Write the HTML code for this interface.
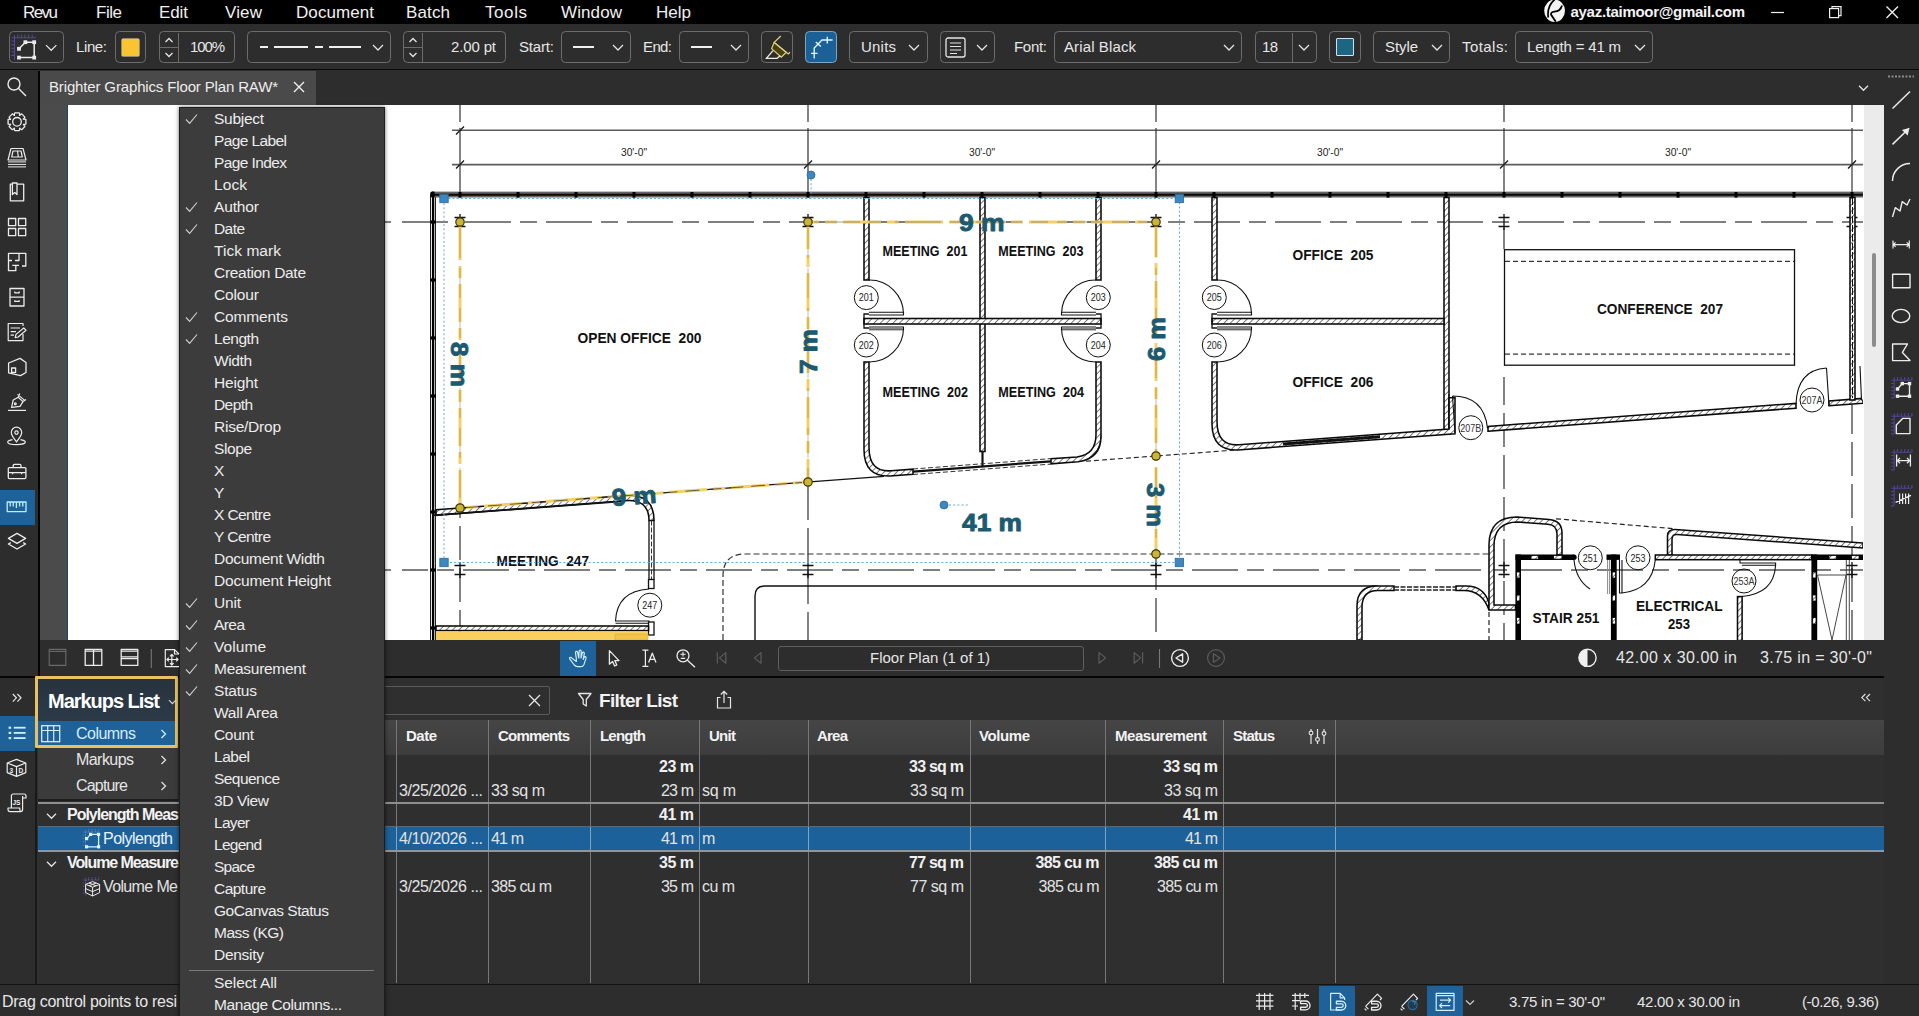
<!DOCTYPE html>
<html><head><meta charset="utf-8"><title>Revu</title>
<style>
html,body{margin:0;padding:0;background:#2f2f2f;}
body{width:1919px;height:1016px;position:relative;overflow:hidden;font-family:"Liberation Sans",sans-serif;}
.a{position:absolute;}
.t{white-space:pre;}
svg{overflow:visible;}
</style></head><body>
<div class="a" style="left:0px;top:0px;width:1919px;height:24px;background:#000;"></div>
<div class="a t" style="left:23.00px;top:2.20px;height:22px;line-height:22px;font-size:17px;color:#f0f0f0;letter-spacing:-1.562px;">Revu</div>
<div class="a t" style="left:96.00px;top:2.20px;height:22px;line-height:22px;font-size:17px;color:#f0f0f0;letter-spacing:-0.465px;">File</div>
<div class="a t" style="left:159.00px;top:2.20px;height:22px;line-height:22px;font-size:17px;color:#f0f0f0;letter-spacing:-0.098px;">Edit</div>
<div class="a t" style="left:225.00px;top:2.20px;height:22px;line-height:22px;font-size:17px;color:#f0f0f0;letter-spacing:0.153px;">View</div>
<div class="a t" style="left:296.00px;top:2.20px;height:22px;line-height:22px;font-size:17px;color:#f0f0f0;letter-spacing:0.074px;">Document</div>
<div class="a t" style="left:406.00px;top:2.20px;height:22px;line-height:22px;font-size:17px;color:#f0f0f0;letter-spacing:0.132px;">Batch</div>
<div class="a t" style="left:485.00px;top:2.20px;height:22px;line-height:22px;font-size:17px;color:#f0f0f0;letter-spacing:0.578px;">Tools</div>
<div class="a t" style="left:561.00px;top:2.20px;height:22px;line-height:22px;font-size:17px;color:#f0f0f0;letter-spacing:0.107px;">Window</div>
<div class="a t" style="left:656.00px;top:2.20px;height:22px;line-height:22px;font-size:17px;color:#f0f0f0;letter-spacing:0.012px;">Help</div>
<svg class="a" style="left:1543px;top:0px;" width="24" height="24" viewBox="0 0 24 24"><ellipse cx="11.6" cy="10.8" rx="10.4" ry="11.2" fill="#f4f4f4"/><path d="M11.6 -0.5 Q3.6 6.5 5.3 17.5" fill="none" stroke="#000" stroke-width="1.7"/><path d="M19 5.5 Q17.5 11.2 11.4 11.6 Q7.6 12 8 14.6 L12.8 21.8" fill="none" stroke="#000" stroke-width="1.8"/></svg>
<div class="a t" style="left:1570.50px;top:1.60px;height:20px;line-height:20px;font-size:15px;color:#f4f4f4;font-weight:700;letter-spacing:-0.286px;">ayaz.taimoor@gmail.com</div>
<svg class="a" style="left:1771px;top:5px;" width="14" height="14" viewBox="0 0 14 14"><path d="M0 7.5 H13" stroke="#f0f0f0" stroke-width="1.2"/></svg>
<svg class="a" style="left:1829px;top:6px;" width="13" height="13" viewBox="0 0 13 13"><rect x="0.6" y="2.6" width="9" height="9" fill="none" stroke="#f0f0f0" stroke-width="1.2"/><path d="M3 2.6 V0.6 H12 V9.6 H9.6" fill="none" stroke="#f0f0f0" stroke-width="1.2"/></svg>
<svg class="a" style="left:1886px;top:6px;" width="13" height="13" viewBox="0 0 13 13"><path d="M0.5 0.5 L12 12 M12 0.5 L0.5 12" stroke="#f0f0f0" stroke-width="1.4"/></svg>
<div class="a" style="left:0px;top:24px;width:1919px;height:45px;background:#2d2d2d;"></div>
<div class="a" style="left:0px;top:68.5px;width:1919px;height:1.7px;background:#080808;"></div>
<div class="a" style="left:9px;top:31.4px;width:55px;height:31.4px;border:1.2px solid #6c6c6c;box-sizing:border-box;border-radius:4.5px;"></div>
<svg class="a" style="left:44.8px;top:42.099999999999994px;" width="12.4" height="10.4" viewBox="0 0 12.4 10.4"><path d="M1 3.1 L6.2 8.3 L11.4 3.1" fill="none" stroke="#e4e4e4" stroke-width="1.25"/></svg>
<div class="a t" style="left:76.00px;top:37.00px;height:20px;line-height:20px;font-size:15px;color:#e6e6e6;letter-spacing:-0.382px;">Line:</div>
<div class="a" style="left:115px;top:31.4px;width:31px;height:31.4px;border:1.2px solid #6c6c6c;box-sizing:border-box;border-radius:4.5px;"></div>
<div class="a" style="left:121.5px;top:38.5px;width:17.5px;height:17.5px;background:#f9c432;border-radius:1px;box-shadow:0 0 0 0.5px #fde9a8;"></div>
<div class="a" style="left:159px;top:31.4px;width:76px;height:31.4px;border:1.2px solid #6c6c6c;box-sizing:border-box;border-radius:4.5px;"></div>
<div class="a" style="left:178px;top:33px;width:1px;height:29px;background:#6c6c6c;"></div>
<div class="a" style="left:160px;top:47px;width:18px;height:1px;background:#6c6c6c;"></div>
<svg class="a" style="left:163px;top:35px;" width="12" height="10" viewBox="0 0 12 10"><path d="M2.5 7 L6 3.5 L9.5 7" fill="none" stroke="#e6e6e6" stroke-width="1.3"/></svg>
<svg class="a" style="left:163px;top:50px;" width="12" height="10" viewBox="0 0 12 10"><path d="M2.5 3 L6 6.5 L9.5 3" fill="none" stroke="#e6e6e6" stroke-width="1.3"/></svg>
<div class="a t" style="left:190.00px;top:37.00px;height:20px;line-height:20px;font-size:15px;color:#e6e6e6;letter-spacing:-1.122px;">100%</div>
<div class="a" style="left:247px;top:31.4px;width:144px;height:31.4px;border:1.2px solid #6c6c6c;box-sizing:border-box;border-radius:4.5px;"></div>
<svg class="a" style="left:258px;top:42px;" width="112" height="10" viewBox="0 0 112 10"><path d="M2 5 H10 M16 5 H50 M57 5 H65 M71 5 H103" stroke="#f0f0f0" stroke-width="2"/></svg>
<svg class="a" style="left:372px;top:42px;" width="12" height="10" viewBox="0 0 12 10"><path d="M1 3.0 L6 8.0 L11 3.0" fill="none" stroke="#e4e4e4" stroke-width="1.25"/></svg>
<div class="a" style="left:403px;top:31.4px;width:103px;height:31.4px;border:1.2px solid #6c6c6c;box-sizing:border-box;border-radius:4.5px;"></div>
<div class="a" style="left:422px;top:33px;width:1px;height:29px;background:#6c6c6c;"></div>
<div class="a" style="left:404px;top:47px;width:18px;height:1px;background:#6c6c6c;"></div>
<svg class="a" style="left:407px;top:35px;" width="12" height="10" viewBox="0 0 12 10"><path d="M2.5 7 L6 3.5 L9.5 7" fill="none" stroke="#e6e6e6" stroke-width="1.3"/></svg>
<svg class="a" style="left:407px;top:50px;" width="12" height="10" viewBox="0 0 12 10"><path d="M2.5 3 L6 6.5 L9.5 3" fill="none" stroke="#e6e6e6" stroke-width="1.3"/></svg>
<div class="a t" style="left:451.00px;top:37.00px;height:20px;line-height:20px;font-size:15px;color:#e6e6e6;letter-spacing:-0.145px;">2.00 pt</div>
<div class="a t" style="left:519.00px;top:37.00px;height:20px;line-height:20px;font-size:15px;color:#e6e6e6;letter-spacing:-0.169px;">Start:</div>
<div class="a" style="left:561px;top:31.4px;width:70px;height:31.4px;border:1.2px solid #6c6c6c;box-sizing:border-box;border-radius:4.5px;"></div>
<svg class="a" style="left:572px;top:42px;" width="24" height="10" viewBox="0 0 24 10"><path d="M1 5 H22" stroke="#f0f0f0" stroke-width="2"/></svg>
<svg class="a" style="left:612px;top:42px;" width="12" height="10" viewBox="0 0 12 10"><path d="M1 3.0 L6 8.0 L11 3.0" fill="none" stroke="#e4e4e4" stroke-width="1.25"/></svg>
<div class="a t" style="left:643.00px;top:37.00px;height:20px;line-height:20px;font-size:15px;color:#e6e6e6;letter-spacing:-0.619px;">End:</div>
<div class="a" style="left:679px;top:31.4px;width:70px;height:31.4px;border:1.2px solid #6c6c6c;box-sizing:border-box;border-radius:4.5px;"></div>
<svg class="a" style="left:690px;top:42px;" width="24" height="10" viewBox="0 0 24 10"><path d="M1 5 H22" stroke="#f0f0f0" stroke-width="2"/></svg>
<svg class="a" style="left:730px;top:42px;" width="12" height="10" viewBox="0 0 12 10"><path d="M1 3.0 L6 8.0 L11 3.0" fill="none" stroke="#e4e4e4" stroke-width="1.25"/></svg>
<div class="a" style="left:761px;top:31.4px;width:32px;height:31.4px;border:1.2px solid #6c6c6c;box-sizing:border-box;border-radius:4.5px;"></div>
<div class="a" style="left:805px;top:31.4px;width:32px;height:31.4px;background:#1c6098;border:1.2px solid #7da5c5;box-sizing:border-box;border-radius:4.5px;"></div>
<div class="a" style="left:849px;top:31.4px;width:79px;height:31.4px;border:1.2px solid #6c6c6c;box-sizing:border-box;border-radius:4.5px;"></div>
<div class="a t" style="left:861.00px;top:37.00px;height:20px;line-height:20px;font-size:15px;color:#e6e6e6;letter-spacing:0.206px;">Units</div>
<svg class="a" style="left:908px;top:42px;" width="12" height="10" viewBox="0 0 12 10"><path d="M1 3.0 L6 8.0 L11 3.0" fill="none" stroke="#e4e4e4" stroke-width="1.25"/></svg>
<div class="a" style="left:940px;top:31.4px;width:55px;height:31.4px;border:1.2px solid #6c6c6c;box-sizing:border-box;border-radius:4.5px;"></div>
<svg class="a" style="left:945px;top:37px;" width="22" height="21" viewBox="0 0 22 21"><rect x="1" y="1" width="19" height="19" rx="2" fill="none" stroke="#e6e6e6" stroke-width="1.3"/><path d="M5 6 H16 M5 9.5 H16 M5 13 H16 M5 16.5 H12" stroke="#e6e6e6" stroke-width="1.2"/></svg>
<svg class="a" style="left:976px;top:42px;" width="12" height="10" viewBox="0 0 12 10"><path d="M1 3.0 L6 8.0 L11 3.0" fill="none" stroke="#e4e4e4" stroke-width="1.25"/></svg>
<div class="a t" style="left:1014.00px;top:37.00px;height:20px;line-height:20px;font-size:15px;color:#e6e6e6;letter-spacing:-0.296px;">Font:</div>
<div class="a" style="left:1054px;top:31.4px;width:188px;height:31.4px;border:1.2px solid #6c6c6c;box-sizing:border-box;border-radius:4.5px;"></div>
<div class="a t" style="left:1064.00px;top:37.00px;height:20px;line-height:20px;font-size:15px;color:#e6e6e6;letter-spacing:0.114px;">Arial Black</div>
<svg class="a" style="left:1223px;top:42px;" width="12" height="10" viewBox="0 0 12 10"><path d="M1 3.0 L6 8.0 L11 3.0" fill="none" stroke="#e4e4e4" stroke-width="1.25"/></svg>
<div class="a" style="left:1255px;top:31.4px;width:62px;height:31.4px;border:1.2px solid #6c6c6c;box-sizing:border-box;border-radius:4.5px;"></div>
<div class="a" style="left:1292px;top:33px;width:1px;height:29px;background:#6c6c6c;"></div>
<div class="a t" style="left:1262.00px;top:37.00px;height:20px;line-height:20px;font-size:15px;color:#e6e6e6;letter-spacing:-0.685px;">18</div>
<svg class="a" style="left:1298px;top:42px;" width="12" height="10" viewBox="0 0 12 10"><path d="M1 3.0 L6 8.0 L11 3.0" fill="none" stroke="#e4e4e4" stroke-width="1.25"/></svg>
<div class="a" style="left:1329px;top:31.4px;width:32px;height:31.4px;border:1.2px solid #6c6c6c;box-sizing:border-box;border-radius:4.5px;"></div>
<div class="a" style="left:1335.5px;top:38px;width:18px;height:18px;background:#1d6583;border:1.5px solid #cfe3ec;box-sizing:border-box;border-radius:1px;"></div>
<div class="a" style="left:1373px;top:31.4px;width:77px;height:31.4px;border:1.2px solid #6c6c6c;box-sizing:border-box;border-radius:4.5px;"></div>
<div class="a t" style="left:1385.00px;top:37.00px;height:20px;line-height:20px;font-size:15px;color:#e6e6e6;letter-spacing:-0.087px;">Style</div>
<svg class="a" style="left:1431px;top:42px;" width="12" height="10" viewBox="0 0 12 10"><path d="M1 3.0 L6 8.0 L11 3.0" fill="none" stroke="#e4e4e4" stroke-width="1.25"/></svg>
<div class="a t" style="left:1462.00px;top:37.00px;height:20px;line-height:20px;font-size:15px;color:#e6e6e6;letter-spacing:0.441px;">Totals:</div>
<div class="a" style="left:1515px;top:31.4px;width:138px;height:31.4px;border:1.2px solid #6c6c6c;box-sizing:border-box;border-radius:4.5px;"></div>
<div class="a t" style="left:1527.00px;top:37.00px;height:20px;line-height:20px;font-size:15px;color:#e6e6e6;letter-spacing:-0.194px;">Length = 41 m</div>
<svg class="a" style="left:1634px;top:42px;" width="12" height="10" viewBox="0 0 12 10"><path d="M1 3.0 L6 8.0 L11 3.0" fill="none" stroke="#e4e4e4" stroke-width="1.25"/></svg>
<div class="a" style="left:0px;top:70.5px;width:1919px;height:35px;background:#2d2d2d;"></div>
<div class="a" style="left:40px;top:71px;width:276px;height:34px;background:#4a4a4a;"></div>
<div class="a t" style="left:49.00px;top:77.00px;height:20px;line-height:20px;font-size:15px;color:#ededed;letter-spacing:-0.147px;">Brighter Graphics Floor Plan RAW*</div>
<svg class="a" style="left:293px;top:81px;" width="12" height="12" viewBox="0 0 12 12"><path d="M1 1 L11 11 M11 1 L1 11" stroke="#f0f0f0" stroke-width="1.4"/></svg>
<svg class="a" style="left:1857.5px;top:82.5px;" width="11.0" height="9.0" viewBox="0 0 11.0 9.0"><path d="M1 2.75 L5.5 7.25 L10.0 2.75" fill="none" stroke="#e4e4e4" stroke-width="1.25"/></svg>
<div class="a" style="left:0px;top:70.2px;width:38px;height:606px;background:#2d2d2d;"></div>
<div class="a" style="left:38px;top:70.5px;width:2px;height:608px;background:#050505;"></div>
<div class="a" style="left:1884px;top:70.5px;width:35px;height:945px;background:#2d2d2d;"></div>
<svg class="a" style="left:1888px;top:75px;" width="26" height="4" viewBox="0 0 26 4"><path d="M0 1.5 H26" stroke="#8a8a8a" stroke-width="2" stroke-dasharray="2 1.5"/></svg>
<div class="a" style="left:40px;top:105px;width:28px;height:535px;background:#4b4b4b;"></div>
<div class="a" style="left:65.5px;top:105px;width:2.5px;height:535px;background:linear-gradient(90deg,#4a5560,#1f3a55);"></div>
<div class="a" style="left:68px;top:105px;width:1796px;height:535px;background:#ffffff;"></div>
<div class="a" style="left:1864px;top:105px;width:20px;height:535px;background:#ebebeb;"></div>
<div class="a" style="left:1872px;top:253px;width:3.5px;height:94px;background:#8c8c8c;border-radius:2px;"></div>
<svg class="a" style="left:0;top:0;font-family:'Liberation Sans',sans-serif" width="1919" height="640" viewBox="0 0 1919 640"><defs><pattern id="h" width="4.5" height="4.5" patternUnits="userSpaceOnUse" patternTransform="rotate(45)"><rect width="4.5" height="4.5" fill="#fff"/><path d="M0 0 V4.5" stroke="#111" stroke-width="1.1"/></pattern><clipPath id="pg"><rect x="68" y="105" width="1795" height="535"/></clipPath></defs><g clip-path="url(#pg)"><path d="M452 130.3 H1863 M452 164.6 H1863" stroke="#5c5c5c" stroke-width="1.6" fill="none"/><path d="M456 168.5 L464 160.5" stroke="#111" stroke-width="1.3"/><path d="M804 168.5 L812 160.5" stroke="#111" stroke-width="1.3"/><path d="M1152 168.5 L1160 160.5" stroke="#111" stroke-width="1.3"/><path d="M1500 168.5 L1508 160.5" stroke="#111" stroke-width="1.3"/><path d="M1848 168.5 L1856 160.5" stroke="#111" stroke-width="1.3"/><path d="M456 134.5 L464 126.5" stroke="#111" stroke-width="1.3"/><text x="634" y="156" font-size="11.5" text-anchor="middle" fill="#222" textLength="26" lengthAdjust="spacingAndGlyphs">30'-0"</text><text x="982" y="156" font-size="11.5" text-anchor="middle" fill="#222" textLength="26" lengthAdjust="spacingAndGlyphs">30'-0"</text><text x="1330" y="156" font-size="11.5" text-anchor="middle" fill="#222" textLength="26" lengthAdjust="spacingAndGlyphs">30'-0"</text><text x="1678" y="156" font-size="11.5" text-anchor="middle" fill="#222" textLength="26" lengthAdjust="spacingAndGlyphs">30'-0"</text><path d="M384 222 H391 M402 222 H448.5 M465 222 H1863" stroke="#555" stroke-width="1.3" stroke-dasharray="46 9 17 9" fill="none"/><path d="M384 570 H391 M402 570 H1863" stroke="#555" stroke-width="1.3" stroke-dasharray="46 9 17 9" fill="none" stroke-dashoffset="20"/><path d="M460 105 V150 M808 105 V150 M1156 105 V150 M1504 105 V150 M1852 105 V150" stroke="#333" stroke-width="1.2" stroke-dasharray="17 6 22 6" fill="none"/><path d="M460 512 V640" stroke="#333" stroke-width="1.2" stroke-dasharray="34 8" fill="none" stroke-dashoffset="-14"/><path d="M808 484 V518" stroke="#333" stroke-width="1.2"/><path d="M808 518 V640" stroke="#333" stroke-width="1.2" stroke-dasharray="34 8" fill="none" stroke-dashoffset="-10"/><path d="M1156 556 V640" stroke="#333" stroke-width="1.2" stroke-dasharray="34 8" fill="none" stroke-dashoffset="0"/><path d="M1504 228 V249 M1504 377 V640" stroke="#333" stroke-width="1.2" stroke-dasharray="34 8" fill="none" stroke-dashoffset="6"/><path d="M1852 400 V640" stroke="#333" stroke-width="1.2" stroke-dasharray="34 8" fill="none" stroke-dashoffset="0"/><path d="M1852 150 V195" stroke="#333" stroke-width="1.2"/><path d="M460 150 V195 M808 150 V195 M1156 150 V195 M1504 150 V195" stroke="#333" stroke-width="1.2"/><path d="M454.5 217.5 H465.5 M454.5 226.5 H465.5 M460 214 V230" stroke="#111" stroke-width="1.3"/><path d="M802.5 217.5 H813.5 M802.5 226.5 H813.5 M808 214 V230" stroke="#111" stroke-width="1.3"/><path d="M1150.5 217.5 H1161.5 M1150.5 226.5 H1161.5 M1156 214 V230" stroke="#111" stroke-width="1.3"/><path d="M1498.5 217.5 H1509.5 M1498.5 226.5 H1509.5 M1504 214 V230" stroke="#111" stroke-width="1.3"/><path d="M1846.5 217.5 H1857.5 M1846.5 226.5 H1857.5 M1852 214 V230" stroke="#111" stroke-width="1.3"/><path d="M454.5 565.5 H465.5 M454.5 574.5 H465.5 M460 562 V578" stroke="#111" stroke-width="1.3"/><path d="M802.5 565.5 H813.5 M802.5 574.5 H813.5 M808 562 V578" stroke="#111" stroke-width="1.3"/><path d="M1150.5 565.5 H1161.5 M1150.5 574.5 H1161.5 M1156 562 V578" stroke="#111" stroke-width="1.3"/><path d="M1498.5 565.5 H1509.5 M1498.5 574.5 H1509.5 M1504 562 V578" stroke="#111" stroke-width="1.3"/><path d="M1846.5 565.5 H1857.5 M1846.5 574.5 H1857.5 M1852 562 V578" stroke="#111" stroke-width="1.3"/><path d="M723 640 V576 Q723 554 745 554 H1489" fill="none" stroke="#333" stroke-width="1.2" stroke-dasharray="6 3"/><path d="M755 640 V596 Q755 586 765 586 H1378" fill="none" stroke="#111" stroke-width="1.4"/><rect x="431" y="191.6" width="1432" height="5.9" fill="#666"/><path d="M431 194.8 H1863" stroke="#0a0a0a" stroke-width="2"/><path d="M430.5 193.5 V640" stroke="#222" stroke-width="1"/><path d="M433.1 191.5 V640" stroke="#000" stroke-width="2.4"/><path d="M435.5 197 V640" stroke="#222" stroke-width="1"/><rect x="458.5" y="192" width="3" height="5.6" fill="#000"/><rect x="516.5" y="192" width="3" height="5.6" fill="#000"/><rect x="574.5" y="192" width="3" height="5.6" fill="#000"/><rect x="632.5" y="192" width="3" height="5.6" fill="#000"/><rect x="690.5" y="192" width="3" height="5.6" fill="#000"/><rect x="748.5" y="192" width="3" height="5.6" fill="#000"/><rect x="806.5" y="192" width="3" height="5.6" fill="#000"/><rect x="864.5" y="192" width="3" height="5.6" fill="#000"/><rect x="922.5" y="192" width="3" height="5.6" fill="#000"/><rect x="980.5" y="192" width="3" height="5.6" fill="#000"/><rect x="1038.5" y="192" width="3" height="5.6" fill="#000"/><rect x="1096.5" y="192" width="3" height="5.6" fill="#000"/><rect x="1154.5" y="192" width="3" height="5.6" fill="#000"/><rect x="1212.5" y="192" width="3" height="5.6" fill="#000"/><rect x="1270.5" y="192" width="3" height="5.6" fill="#000"/><rect x="1328.5" y="192" width="3" height="5.6" fill="#000"/><rect x="1386.5" y="192" width="3" height="5.6" fill="#000"/><rect x="1444.5" y="192" width="3" height="5.6" fill="#000"/><rect x="1502.5" y="192" width="3" height="5.6" fill="#000"/><rect x="1560.5" y="192" width="3" height="5.6" fill="#000"/><rect x="1618.5" y="192" width="3" height="5.6" fill="#000"/><rect x="1676.5" y="192" width="3" height="5.6" fill="#000"/><rect x="1734.5" y="192" width="3" height="5.6" fill="#000"/><rect x="1792.5" y="192" width="3" height="5.6" fill="#000"/><rect x="1850.5" y="192" width="3" height="5.6" fill="#000"/><rect x="1908.5" y="192" width="3" height="5.6" fill="#000"/><rect x="430.5" y="220.4" width="5.5" height="3.2" fill="#000"/><rect x="430.5" y="278.4" width="5.5" height="3.2" fill="#000"/><rect x="430.5" y="336.4" width="5.5" height="3.2" fill="#000"/><rect x="430.5" y="394.4" width="5.5" height="3.2" fill="#000"/><rect x="430.5" y="452.4" width="5.5" height="3.2" fill="#000"/><rect x="430.5" y="510.4" width="5.5" height="3.2" fill="#000"/><rect x="430.5" y="568.4" width="5.5" height="3.2" fill="#000"/><rect x="430.5" y="626.4" width="5.5" height="3.2" fill="#000"/><rect x="430.5" y="684.4" width="5.5" height="3.2" fill="#000"/><rect x="430.5" y="192" width="4" height="5" fill="#000"/><rect x="864" y="197.5" width="5" height="82.5" fill="url(#h)" stroke="#0a0a0a" stroke-width="1.55"/><rect x="1096" y="197.5" width="5" height="82.5" fill="url(#h)" stroke="#0a0a0a" stroke-width="1.55"/><rect x="980" y="197.5" width="5" height="254" fill="url(#h)" stroke="#0a0a0a" stroke-width="1.55"/><path d="M982.5 451 V466" stroke="#111" stroke-width="2.2"/><rect x="864" y="318.5" width="237" height="5.5" fill="url(#h)" stroke="#0a0a0a" stroke-width="1.55"/><path d="M980 318 V324.5 M985 318 V324.5" stroke="#fff" stroke-width="0"/><path d="M869 314 H864 V328 H869 M1096 314 H1101 V328 H1096" fill="none" stroke="#111" stroke-width="1.3"/><path d="M869 280 A34 34 0 0 1 903.5 314 M869 312.3 H903.5 V315 H869" fill="none" stroke="#111" stroke-width="1.1"/><path d="M869 362 A34 34 0 0 0 903.5 328 M869 329.7 H903.5 V327 H869" fill="none" stroke="#111" stroke-width="1.1"/><path d="M869 328.5 H903" stroke="#888" stroke-width="2.2"/><path d="M1096 280 A34 34 0 0 0 1061.5 314 M1096 312.3 H1061.5 V315 H1096" fill="none" stroke="#111" stroke-width="1.1"/><path d="M1096 362 A34 34 0 0 1 1061.5 328 M1096 329.7 H1061.5 V327 H1096" fill="none" stroke="#111" stroke-width="1.1"/><path d="M1062 328.5 H1096" stroke="#888" stroke-width="2.2"/><path d="M864 362 V449.8 Q864 477.0 890 475.9 L913 474.2 L913 469.2 L891 470.8 Q869 472.4 869 447.4 V362 Z" fill="url(#h)" stroke="#0a0a0a" stroke-width="1.55"/><path d="M1101 362 V436.1 Q1101 459.1 1078 461.8 L1051 463.8 L1051 458.8 L1077 456.9 Q1096 454.5 1096 434.5 V362 Z" fill="url(#h)" stroke="#0a0a0a" stroke-width="1.55"/><path d="M913 471.7 L1051 461.3" stroke="#111" stroke-width="2.2"/><path d="M913 469.0 L1051 458.6 M913 474.5 L1051 464.1" stroke="#333" stroke-width="1" stroke-dasharray="5 2.5"/><path d="M1101 436.1 Q1101 452.1 1086 460.2" fill="none" stroke="#111" stroke-width="1"/><rect x="1212" y="197.5" width="5" height="82.5" fill="url(#h)" stroke="#0a0a0a" stroke-width="1.55"/><rect x="1444" y="197.5" width="5" height="236.6" fill="url(#h)" stroke="#0a0a0a" stroke-width="1.55"/><rect x="1212" y="318.5" width="232" height="5.5" fill="url(#h)" stroke="#0a0a0a" stroke-width="1.55"/><path d="M1217 314 H1212 V328 H1217" fill="none" stroke="#111" stroke-width="1.3"/><path d="M1217 280 A34 34 0 0 1 1251.5 314 M1217 312.3 H1251.5 V315 H1217" fill="none" stroke="#111" stroke-width="1.1"/><path d="M1217 362 A34 34 0 0 0 1251.5 328 M1217 329.7 H1251.5 V327 H1217" fill="none" stroke="#111" stroke-width="1.1"/><path d="M1217 328.5 H1251" stroke="#888" stroke-width="2.2"/><path d="M1212 362 V423.8 Q1212 451.0 1238 449.9 L1455 433.7 V397.7 H1449 V429.1 L1239 444.8 Q1217 446.4 1217 421.4 V362 Z" fill="url(#h)" stroke="#0a0a0a" stroke-width="1.55"/><path d="M1283 444.0 L1380 436.8" stroke="#111" stroke-width="3"/><path d="M1449 429.1 V394.1" stroke="#111" stroke-width="1.2"/><path d="M1452.5 396 Q1484 396 1487.5 428.2 M1452.5 396 L1455 432.7" fill="none" stroke="#111" stroke-width="1.1"/><path d="M1488 431.2 L1796 408.2 L1796 403.4 L1488 426.4 Z" fill="url(#h)" stroke="#0a0a0a" stroke-width="1.55"/><path d="M1826.5 368 Q1797 370 1796 404.2 M1826.5 368 L1829 405.7" fill="none" stroke="#111" stroke-width="1.1"/><path d="M1829 405.7 L1863 403.2 L1863 398.4 L1829 400.9 Z" fill="url(#h)" stroke="#0a0a0a" stroke-width="1.55"/><rect x="1850" y="197.5" width="5" height="202.5" fill="url(#h)" stroke="#0a0a0a" stroke-width="1.55"/><path d="M1852.5 198 V398" stroke="#111" stroke-width="1" stroke-dasharray="7 2"/><path d="M1860 366 L1861.5 400 H1866 V366" fill="#fff" stroke="#111" stroke-width="1.1"/><rect x="1504.5" y="249.7" width="290" height="115.5" fill="#fff" stroke="#111" stroke-width="1.3"/><path d="M1505 261.3 H1794 M1505 354.2 H1794" stroke="#333" stroke-width="1.2" stroke-dasharray="5 3"/><path d="M652 493.7 L884 476.3" stroke="#111" stroke-width="1.2"/><path d="M1086 461.2 L1236 450.0" stroke="#222" stroke-width="1.1" stroke-dasharray="5 3"/><path d="M436 509.8 L626 495.6 Q654 493.5 654 520.5 H649 Q649 498.9 625 500.7 L436 515.3 Z" fill="url(#h)" stroke="#0a0a0a" stroke-width="1.55"/><path d="M432 515.3 L625 501.2" stroke="#111" stroke-width="1.8"/><path d="M649 520.5 V580 M654 520.5 V580" stroke="#111" stroke-width="1.3"/><path d="M651.5 520.5 V580" stroke="#333" stroke-width="1" stroke-dasharray="5 2"/><rect x="648.5" y="579.5" width="5.5" height="9" fill="#fff" stroke="#111" stroke-width="1.3"/><path d="M649 589 Q617 591 615.5 621 H649 V623.3 H615.5" fill="none" stroke="#111" stroke-width="1.1"/><rect x="648.5" y="622" width="5.5" height="13" fill="#fff" stroke="#111" stroke-width="1.3"/><rect x="436" y="626" width="212.5" height="4.6" fill="url(#h)" stroke="#0a0a0a" stroke-width="1.55"/><rect x="436" y="631.3" width="212" height="9" fill="#f9d05e"/><rect x="615" y="634" width="33" height="6" fill="#f2c448" stroke="#d9b040" stroke-width="0.7"/><path d="M1357 640 V606 Q1357 586 1377 586 H1394 V590.5 H1378 Q1362 590.5 1362 607 V640 Z" fill="url(#h)" stroke="#0a0a0a" stroke-width="1.55"/><path d="M1456 586 H1466 Q1484 586 1489 603 L1489 610 Q1482 590.5 1464 590.5 H1456 Z" fill="url(#h)" stroke="#0a0a0a" stroke-width="1.55"/><path d="M1394 587 H1456 M1394 590 H1456" stroke="#222" stroke-width="1.6" stroke-dasharray="5 1.5"/><path d="M1489 610 V545 Q1489 517 1517 517 L1549 519.5 Q1562 520.5 1562 533 V555 H1557 V534 Q1557 525 1548 524.3 L1518 522 Q1494 522 1494 546 V605 H1515.5 V610 Z" fill="url(#h)" stroke="#0a0a0a" stroke-width="1.55"/><path d="M1489 612 V640" stroke="#222" stroke-width="1.2" stroke-dasharray="5 3"/><path d="M1556 518.8 L1674 528.7" stroke="#222" stroke-width="1.2" stroke-dasharray="5 3"/><path d="M1667.5 555 V536 Q1667.5 529.5 1675 529.6 L1863 543 V548 L1677 534.5 Q1672 534.3 1672 539 V555 Z" fill="url(#h)" stroke="#0a0a0a" stroke-width="1.55"/><rect x="1655.3" y="555" width="156.5" height="4.7" fill="url(#h)" stroke="#0a0a0a" stroke-width="1.55"/><path d="M1515.5 557.2 H1574" stroke="#000" stroke-width="5.4"/><circle cx="1574" cy="557.2" r="2.7" fill="#000"/><path d="M1518.2 554.5 V640" stroke="#000" stroke-width="5.6"/><path d="M1606.5 557.2 H1620" stroke="#000" stroke-width="5.4"/><path d="M1613.8 554.5 V640" stroke="#000" stroke-width="5.8"/><path d="M1811.5 557.2 H1863" stroke="#000" stroke-width="5.4"/><path d="M1814.3 554.5 V640" stroke="#000" stroke-width="5.8"/><rect x="1531" y="555.5" width="7.5" height="3.6" fill="url(#h)" stroke="#000" stroke-width="0.8"/><rect x="1553.5" y="555.5" width="8.5" height="3.6" fill="url(#h)" stroke="#000" stroke-width="0.8"/><rect x="1829" y="555.5" width="7.5" height="3.6" fill="url(#h)" stroke="#000" stroke-width="0.8"/><rect x="1851.5" y="555.5" width="7.5" height="3.6" fill="url(#h)" stroke="#000" stroke-width="0.8"/><rect x="1516.6" y="572" width="3.3" height="6" fill="url(#h)" stroke="#000" stroke-width="0.8"/><rect x="1516.6" y="595" width="3.3" height="6" fill="url(#h)" stroke="#000" stroke-width="0.8"/><rect x="1516.6" y="617.5" width="3.3" height="6.5" fill="url(#h)" stroke="#000" stroke-width="0.8"/><rect x="1612.2" y="572" width="3.3" height="6" fill="url(#h)" stroke="#000" stroke-width="0.8"/><rect x="1612.2" y="595" width="3.3" height="6" fill="url(#h)" stroke="#000" stroke-width="0.8"/><rect x="1612.2" y="617.5" width="3.3" height="6.5" fill="url(#h)" stroke="#000" stroke-width="0.8"/><rect x="1812.7" y="572" width="3.3" height="6" fill="url(#h)" stroke="#000" stroke-width="0.8"/><rect x="1812.7" y="595" width="3.3" height="6" fill="url(#h)" stroke="#000" stroke-width="0.8"/><rect x="1812.7" y="617.5" width="3.3" height="6.5" fill="url(#h)" stroke="#000" stroke-width="0.8"/><path d="M1574 560 Q1576 580 1590 589" fill="none" stroke="#111" stroke-width="1.1"/><path d="M1607.6 560 V594 M1609.6 560 V594" stroke="#888" stroke-width="1"/><path d="M1619.5 560 V593 H1622 M1622 593 Q1652 590 1655.3 560 M1622 560 V593" fill="none" stroke="#111" stroke-width="1.1"/><path d="M1740 559.7 V563 H1775.6 V565.3 H1742 M1775.6 565.3 Q1774 594 1741.5 596.5" fill="none" stroke="#111" stroke-width="1.1"/><rect x="1737.5" y="596.6" width="4.6" height="44" fill="url(#h)" stroke="#0a0a0a" stroke-width="1.55"/><path d="M1817.5 575 L1832 640 L1846 575 M1846.3 560 V640 M1849.3 560 V640 M1817.5 575 H1846" fill="none" stroke="#333" stroke-width="0.9"/><circle cx="866.3" cy="297.6" r="12" fill="#fff" stroke="#111" stroke-width="1"/><text x="866.3" y="301.40000000000003" font-size="10.5" text-anchor="middle" fill="#222" textLength="15" lengthAdjust="spacingAndGlyphs">201</text><circle cx="866.3" cy="345" r="12" fill="#fff" stroke="#111" stroke-width="1"/><text x="866.3" y="348.8" font-size="10.5" text-anchor="middle" fill="#222" textLength="15" lengthAdjust="spacingAndGlyphs">202</text><circle cx="1098.3" cy="297.6" r="12" fill="#fff" stroke="#111" stroke-width="1"/><text x="1098.3" y="301.40000000000003" font-size="10.5" text-anchor="middle" fill="#222" textLength="15" lengthAdjust="spacingAndGlyphs">203</text><circle cx="1098.3" cy="345" r="12" fill="#fff" stroke="#111" stroke-width="1"/><text x="1098.3" y="348.8" font-size="10.5" text-anchor="middle" fill="#222" textLength="15" lengthAdjust="spacingAndGlyphs">204</text><circle cx="1214.3" cy="297.5" r="12" fill="#fff" stroke="#111" stroke-width="1"/><text x="1214.3" y="301.3" font-size="10.5" text-anchor="middle" fill="#222" textLength="15" lengthAdjust="spacingAndGlyphs">205</text><circle cx="1214.3" cy="345" r="12" fill="#fff" stroke="#111" stroke-width="1"/><text x="1214.3" y="348.8" font-size="10.5" text-anchor="middle" fill="#222" textLength="15" lengthAdjust="spacingAndGlyphs">206</text><circle cx="649.8" cy="605.2" r="12" fill="#fff" stroke="#111" stroke-width="1"/><text x="649.8" y="609.0" font-size="10.5" text-anchor="middle" fill="#222" textLength="15" lengthAdjust="spacingAndGlyphs">247</text><circle cx="1590.3" cy="557.8" r="12" fill="#fff" stroke="#111" stroke-width="1"/><text x="1590.3" y="561.5999999999999" font-size="10.5" text-anchor="middle" fill="#222" textLength="15" lengthAdjust="spacingAndGlyphs">251</text><circle cx="1638" cy="557.8" r="12" fill="#fff" stroke="#111" stroke-width="1"/><text x="1638" y="561.5999999999999" font-size="10.5" text-anchor="middle" fill="#222" textLength="15" lengthAdjust="spacingAndGlyphs">253</text><circle cx="1470.8" cy="427.7" r="12" fill="none" stroke="#111" stroke-width="1"/><text x="1470.8" y="431.5" font-size="10.5" text-anchor="middle" fill="#333" textLength="21" lengthAdjust="spacingAndGlyphs">207B</text><circle cx="1812" cy="400" r="12" fill="none" stroke="#111" stroke-width="1"/><text x="1812" y="403.8" font-size="10.5" text-anchor="middle" fill="#333" textLength="21" lengthAdjust="spacingAndGlyphs">207A</text><circle cx="1744" cy="581" r="12" fill="none" stroke="#111" stroke-width="1"/><text x="1744" y="584.8" font-size="10.5" text-anchor="middle" fill="#333" textLength="21" lengthAdjust="spacingAndGlyphs">253A</text><text x="882.5" y="255.8" font-size="15.5" font-weight="700" fill="#111" textLength="85.0" lengthAdjust="spacingAndGlyphs" xml:space="preserve">MEETING  201</text><text x="998.3" y="255.8" font-size="15.5" font-weight="700" fill="#111" textLength="85.2" lengthAdjust="spacingAndGlyphs" xml:space="preserve">MEETING  203</text><text x="882.5" y="396.7" font-size="15.5" font-weight="700" fill="#111" textLength="85.5" lengthAdjust="spacingAndGlyphs" xml:space="preserve">MEETING  202</text><text x="998.3" y="396.7" font-size="15.5" font-weight="700" fill="#111" textLength="85.7" lengthAdjust="spacingAndGlyphs" xml:space="preserve">MEETING  204</text><text x="577.5" y="343.1" font-size="15.5" font-weight="700" fill="#111" textLength="124.0" lengthAdjust="spacingAndGlyphs" xml:space="preserve">OPEN OFFICE  200</text><text x="1292.5" y="260.0" font-size="15.5" font-weight="700" fill="#111" textLength="81.0" lengthAdjust="spacingAndGlyphs" xml:space="preserve">OFFICE  205</text><text x="1292.5" y="387.2" font-size="15.5" font-weight="700" fill="#111" textLength="81.0" lengthAdjust="spacingAndGlyphs" xml:space="preserve">OFFICE  206</text><text x="1597" y="313.5" font-size="15.5" font-weight="700" fill="#111" textLength="126.0" lengthAdjust="spacingAndGlyphs" xml:space="preserve">CONFERENCE  207</text><text x="496.6" y="566.0" font-size="15.5" font-weight="700" fill="#111" textLength="92.4" lengthAdjust="spacingAndGlyphs" xml:space="preserve">MEETING  247</text><text x="1532.6" y="622.5" font-size="15.5" font-weight="700" fill="#111" textLength="66.8" lengthAdjust="spacingAndGlyphs" xml:space="preserve">STAIR 251</text><text x="1636" y="610.5" font-size="15.5" font-weight="700" fill="#111" textLength="86.6" lengthAdjust="spacingAndGlyphs" xml:space="preserve">ELECTRICAL</text><text x="1668" y="629.2" font-size="15.5" font-weight="700" fill="#111" textLength="22.0" lengthAdjust="spacingAndGlyphs" xml:space="preserve">253</text><path d="M444 198.5 H1179.5 V562.5 H444 Z" fill="none" stroke="#66a6d6" stroke-width="1" stroke-dasharray="2 2.2"/><path d="M811 179 V198" stroke="#66a6d6" stroke-width="1" stroke-dasharray="2 2.2"/><path d="M460 222 V508 L808 482 V222 H1156 V456 V554" fill="none" stroke="#f4d067" stroke-width="3" stroke-dasharray="38 6 12 6" stroke-linejoin="round"/><path d="M460 228 V504 M808 228 V478 M1156 228 V550" stroke="#6a5a28" stroke-width="0.8" stroke-dasharray="30 10" opacity="0.5"/><path d="M814 222 H1150" stroke="#777" stroke-width="1" stroke-dasharray="46 9 17 9" opacity="0.7"/><path d="M466 507.6 L802 482.5" stroke="#333" stroke-width="1" stroke-dasharray="14 8" opacity="0.75"/><circle cx="460" cy="222" r="4.2" fill="#cbb538" stroke="#3d3508" stroke-width="1.2"/><circle cx="808" cy="222" r="4.2" fill="#cbb538" stroke="#3d3508" stroke-width="1.2"/><circle cx="1156" cy="222" r="4.2" fill="#cbb538" stroke="#3d3508" stroke-width="1.2"/><circle cx="460" cy="508" r="4.2" fill="#cbb538" stroke="#3d3508" stroke-width="1.2"/><circle cx="808" cy="482" r="4.2" fill="#cbb538" stroke="#3d3508" stroke-width="1.2"/><circle cx="1156" cy="456" r="4.2" fill="#cbb538" stroke="#3d3508" stroke-width="1.2"/><circle cx="1156" cy="554" r="4.2" fill="#cbb538" stroke="#3d3508" stroke-width="1.2"/><rect x="439.8" y="194.3" width="8.4" height="8.4" fill="#3b88c3" stroke="#2a6a9c" stroke-width="0.8"/><rect x="1175.2" y="194.3" width="8.4" height="8.4" fill="#3b88c3" stroke="#2a6a9c" stroke-width="0.8"/><rect x="439.8" y="558.3" width="8.4" height="8.4" fill="#3b88c3" stroke="#2a6a9c" stroke-width="0.8"/><rect x="1175.2" y="558.3" width="8.4" height="8.4" fill="#3b88c3" stroke="#2a6a9c" stroke-width="0.8"/><circle cx="811" cy="175" r="4" fill="#3b88c3" stroke="#2a6a9c" stroke-width="0.8"/><circle cx="944" cy="505" r="4" fill="#3b88c3" stroke="#2a6a9c" stroke-width="0.8"/><path d="M949 505 H968" stroke="#66a6d6" stroke-width="1" stroke-dasharray="2 2.2"/><text x="959" y="231.3" font-size="24" font-weight="700" fill="#1c5a72" stroke="#1c5a72" stroke-width="0.9" stroke-linejoin="round" textLength="45.5" lengthAdjust="spacingAndGlyphs">9 m</text><text x="962" y="530.5" font-size="24" font-weight="700" fill="#1c5a72" stroke="#1c5a72" stroke-width="0.9" stroke-linejoin="round" textLength="60" lengthAdjust="spacingAndGlyphs">41 m</text><text transform="translate(612.5,506) rotate(-4.3)" x="0" y="0" font-size="24" font-weight="700" fill="#1c5a72" stroke="#1c5a72" stroke-width="0.9" stroke-linejoin="round" textLength="44.5" lengthAdjust="spacingAndGlyphs">9 m</text><text transform="translate(451.4,342) rotate(90)" x="0" y="0" font-size="24" font-weight="700" fill="#1c5a72" stroke="#1c5a72" stroke-width="0.9" stroke-linejoin="round" textLength="45" lengthAdjust="spacingAndGlyphs">8 m</text><text transform="translate(816.6,374) rotate(-90)" x="0" y="0" font-size="24" font-weight="700" fill="#1c5a72" stroke="#1c5a72" stroke-width="0.9" stroke-linejoin="round" textLength="45" lengthAdjust="spacingAndGlyphs">7 m</text><text transform="translate(1164.6,361) rotate(-90)" x="0" y="0" font-size="24" font-weight="700" fill="#1c5a72" stroke="#1c5a72" stroke-width="0.9" stroke-linejoin="round" textLength="44" lengthAdjust="spacingAndGlyphs">6 m</text><text transform="translate(1147.4,483) rotate(90)" x="0" y="0" font-size="24" font-weight="700" fill="#1c5a72" stroke="#1c5a72" stroke-width="0.9" stroke-linejoin="round" textLength="44" lengthAdjust="spacingAndGlyphs">3 m</text></g></svg>
<div class="a" style="left:40px;top:640px;width:1844px;height:36px;background:#2d2d2d;"></div>
<div class="a" style="left:0px;top:675.9px;width:1884px;height:2.2px;background:#050505;"></div>
<div class="a" style="left:560px;top:641px;width:36px;height:35px;background:#1e6299;"></div>
<div class="a" style="left:777.5px;top:645.5px;width:306px;height:25px;border:1px solid #5f5f5f;box-sizing:border-box;border-radius:3px;"></div>
<div class="a t" style="left:870.00px;top:647.50px;height:20px;line-height:20px;font-size:15px;color:#e6e6e6;">Floor Plan (1 of 1)</div>
<div class="a t" style="left:1616.00px;top:647.00px;height:21px;line-height:21px;font-size:16px;color:#e6e6e6;letter-spacing:0.475px;">42.00 x 30.00 in</div>
<div class="a t" style="left:1760.00px;top:647.00px;height:21px;line-height:21px;font-size:16px;color:#e6e6e6;letter-spacing:0.331px;">3.75 in = 30&#x27;-0&quot;</div>
<div class="a" style="left:0px;top:678px;width:1884px;height:307px;background:#2f2f2f;"></div>
<div class="a" style="left:0px;top:678px;width:35px;height:307px;background:#2d2d2d;"></div>
<div class="a" style="left:35px;top:678px;width:2.2px;height:307px;background:#191919;"></div>
<div class="a" style="left:0px;top:716px;width:35px;height:34.5px;background:#1e6299;"></div>
<svg class="a" style="left:12.4px;top:693px;" width="10" height="10" viewBox="0 0 10 10"><path d="M0.8 1 L4.4 4.8 L0.8 8.6 M5.4 1 L9 4.8 L5.4 8.6" fill="none" stroke="#e6e6e6" stroke-width="1.2"/></svg>
<svg class="a" style="left:1861px;top:693.4px;" width="10" height="10" viewBox="0 0 10 10"><path d="M4.4 1 L0.8 4.6 L4.4 8.2 M9 1 L5.4 4.6 L9 8.2" fill="none" stroke="#e0e0e0" stroke-width="1.15"/></svg>
<div class="a" style="left:380px;top:686px;width:169.5px;height:29px;border:1px solid #5a5a5a;box-sizing:border-box;border-radius:2px;"></div>
<svg class="a" style="left:528px;top:694px;" width="13" height="13" viewBox="0 0 13 13"><path d="M1 1 L12 12 M12 1 L1 12" stroke="#e6e6e6" stroke-width="1.3"/></svg>
<svg class="a" style="left:577px;top:692px;" width="16" height="16" viewBox="0 0 16 16"><path d="M1.5 1.5 H14 L9.3 7.5 V14 L6.2 12 V7.5 Z" fill="none" stroke="#e6e6e6" stroke-width="1.3" stroke-linejoin="round"/></svg>
<div class="a t" style="left:599.00px;top:688.00px;height:25px;line-height:25px;font-size:19px;color:#f2f2f2;font-weight:700;letter-spacing:-0.651px;">Filter List</div>
<svg class="a" style="left:716px;top:690px;" width="17" height="20" viewBox="0 0 17 20"><path d="M4.5 7.5 H1.5 V18 H14.5 V7.5 H11.5 M8 13 V1.5 M4.8 4.5 L8 1.3 L11.2 4.5" fill="none" stroke="#e6e6e6" stroke-width="1.2"/></svg>
<div class="a" style="left:384px;top:720px;width:1500px;height:34.5px;background:linear-gradient(180deg,#454545,#3d3d3d);"></div>
<div class="a" style="left:395.8px;top:720px;width:1px;height:263px;background:#777;"></div>
<div class="a" style="left:487.9px;top:720px;width:1px;height:263px;background:#777;"></div>
<div class="a" style="left:589.8px;top:720px;width:1px;height:263px;background:#777;"></div>
<div class="a" style="left:699.1px;top:720px;width:1px;height:263px;background:#777;"></div>
<div class="a" style="left:807.5px;top:720px;width:1px;height:263px;background:#777;"></div>
<div class="a" style="left:969.5px;top:720px;width:1px;height:263px;background:#777;"></div>
<div class="a" style="left:1104.5px;top:720px;width:1px;height:263px;background:#777;"></div>
<div class="a" style="left:1222.5px;top:720px;width:1px;height:263px;background:#777;"></div>
<div class="a" style="left:1334.5px;top:720px;width:1px;height:263px;background:#777;"></div>
<div class="a t" style="left:406.00px;top:725.50px;height:20px;line-height:20px;font-size:15px;color:#f2f2f2;font-weight:700;letter-spacing:-0.505px;">Date</div>
<div class="a t" style="left:498.00px;top:725.50px;height:20px;line-height:20px;font-size:15px;color:#f2f2f2;font-weight:700;letter-spacing:-0.788px;">Comments</div>
<div class="a t" style="left:600.00px;top:725.50px;height:20px;line-height:20px;font-size:15px;color:#f2f2f2;font-weight:700;letter-spacing:-0.798px;">Length</div>
<div class="a t" style="left:709.00px;top:725.50px;height:20px;line-height:20px;font-size:15px;color:#f2f2f2;font-weight:700;letter-spacing:-0.720px;">Unit</div>
<div class="a t" style="left:817.00px;top:725.50px;height:20px;line-height:20px;font-size:15px;color:#f2f2f2;font-weight:700;letter-spacing:-0.785px;">Area</div>
<div class="a t" style="left:979.00px;top:725.50px;height:20px;line-height:20px;font-size:15px;color:#f2f2f2;font-weight:700;letter-spacing:-0.413px;">Volume</div>
<div class="a t" style="left:1115.00px;top:725.50px;height:20px;line-height:20px;font-size:15px;color:#f2f2f2;font-weight:700;letter-spacing:-0.470px;">Measurement</div>
<div class="a t" style="left:1233.00px;top:725.50px;height:20px;line-height:20px;font-size:15px;color:#f2f2f2;font-weight:700;letter-spacing:-0.769px;">Status</div>
<svg class="a" style="left:1308px;top:727px;" width="19" height="19" viewBox="0 0 19 19"><path d="M3 2 V17 M9.5 2 V17 M16 2 V17" stroke="#e6e6e6" stroke-width="1.2"/><circle cx="3" cy="6" r="1.9" fill="#3d3d3d" stroke="#e6e6e6" stroke-width="1.1"/><circle cx="9.5" cy="12.5" r="1.9" fill="#3d3d3d" stroke="#e6e6e6" stroke-width="1.1"/><circle cx="16" cy="6.5" r="1.9" fill="#3d3d3d" stroke="#e6e6e6" stroke-width="1.1"/></svg>
<div class="a" style="left:37.5px;top:827px;width:1846.5px;height:23px;background:#1c6199;"></div>
<div class="a" style="left:37.5px;top:802.3px;width:1846.5px;height:2px;background:#8e8e8e;"></div>
<div class="a" style="left:37.5px;top:850.3px;width:1846.5px;height:2px;background:#8a99a6;"></div>
<div class="a" style="left:37.5px;top:825.5px;width:1846.5px;height:1.4px;background:#5b6a78;"></div>
<div class="a" style="left:395.8px;top:827px;width:1px;height:23px;background:#7fa5c4;"></div>
<div class="a" style="left:487.9px;top:827px;width:1px;height:23px;background:#7fa5c4;"></div>
<div class="a" style="left:589.8px;top:827px;width:1px;height:23px;background:#7fa5c4;"></div>
<div class="a" style="left:699.1px;top:827px;width:1px;height:23px;background:#7fa5c4;"></div>
<div class="a" style="left:807.5px;top:827px;width:1px;height:23px;background:#7fa5c4;"></div>
<div class="a" style="left:969.5px;top:827px;width:1px;height:23px;background:#7fa5c4;"></div>
<div class="a" style="left:1104.5px;top:827px;width:1px;height:23px;background:#7fa5c4;"></div>
<div class="a" style="left:1222.5px;top:827px;width:1px;height:23px;background:#7fa5c4;"></div>
<div class="a" style="left:1334.5px;top:827px;width:1px;height:23px;background:#7fa5c4;"></div>
<div class="a t" style="left:659.00px;top:755.50px;height:21px;line-height:21px;font-size:16px;color:#f0f0f0;font-weight:700;letter-spacing:-0.490px;">23 m</div>
<div class="a t" style="left:909.00px;top:755.50px;height:21px;line-height:21px;font-size:16px;color:#f0f0f0;font-weight:700;letter-spacing:-0.764px;">33 sq m</div>
<div class="a t" style="left:1163.00px;top:755.50px;height:21px;line-height:21px;font-size:16px;color:#f0f0f0;font-weight:700;letter-spacing:-0.764px;">33 sq m</div>
<div class="a t" style="left:399.00px;top:779.50px;height:21px;line-height:21px;font-size:16px;color:#e2e2e2;letter-spacing:-0.413px;">3/25/2026 ...</div>
<div class="a t" style="left:491.00px;top:779.50px;height:21px;line-height:21px;font-size:16px;color:#e2e2e2;letter-spacing:-0.486px;">33 sq m</div>
<div class="a t" style="left:661.00px;top:779.50px;height:21px;line-height:21px;font-size:16px;color:#e2e2e2;letter-spacing:-0.857px;">23 m</div>
<div class="a t" style="left:702.00px;top:779.50px;height:21px;line-height:21px;font-size:16px;color:#e2e2e2;letter-spacing:-0.224px;">sq m</div>
<div class="a t" style="left:910.00px;top:779.50px;height:21px;line-height:21px;font-size:16px;color:#e2e2e2;letter-spacing:-0.486px;">33 sq m</div>
<div class="a t" style="left:1164.00px;top:779.50px;height:21px;line-height:21px;font-size:16px;color:#e2e2e2;letter-spacing:-0.486px;">33 sq m</div>
<div class="a t" style="left:659.00px;top:803.50px;height:21px;line-height:21px;font-size:16px;color:#f0f0f0;font-weight:700;letter-spacing:-0.490px;">41 m</div>
<div class="a t" style="left:1183.00px;top:803.50px;height:21px;line-height:21px;font-size:16px;color:#f0f0f0;font-weight:700;letter-spacing:-0.490px;">41 m</div>
<div class="a t" style="left:399.00px;top:827.50px;height:21px;line-height:21px;font-size:16px;color:#e2e2e2;letter-spacing:-0.413px;">4/10/2026 ...</div>
<div class="a t" style="left:491.00px;top:827.50px;height:21px;line-height:21px;font-size:16px;color:#e2e2e2;letter-spacing:-0.857px;">41 m</div>
<div class="a t" style="left:661.00px;top:827.50px;height:21px;line-height:21px;font-size:16px;color:#e2e2e2;letter-spacing:-0.857px;">41 m</div>
<div class="a t" style="left:702.00px;top:827.50px;height:21px;line-height:21px;font-size:16px;color:#e2e2e2;">m</div>
<div class="a t" style="left:1185.00px;top:827.50px;height:21px;line-height:21px;font-size:16px;color:#e2e2e2;letter-spacing:-0.857px;">41 m</div>
<div class="a t" style="left:659.00px;top:851.50px;height:21px;line-height:21px;font-size:16px;color:#f0f0f0;font-weight:700;letter-spacing:-0.490px;">35 m</div>
<div class="a t" style="left:909.00px;top:851.50px;height:21px;line-height:21px;font-size:16px;color:#f0f0f0;font-weight:700;letter-spacing:-0.764px;">77 sq m</div>
<div class="a t" style="left:1035.50px;top:851.50px;height:21px;line-height:21px;font-size:16px;color:#f0f0f0;font-weight:700;letter-spacing:-0.641px;">385 cu m</div>
<div class="a t" style="left:1154.00px;top:851.50px;height:21px;line-height:21px;font-size:16px;color:#f0f0f0;font-weight:700;letter-spacing:-0.641px;">385 cu m</div>
<div class="a t" style="left:399.00px;top:875.50px;height:21px;line-height:21px;font-size:16px;color:#e2e2e2;letter-spacing:-0.413px;">3/25/2026 ...</div>
<div class="a t" style="left:491.00px;top:875.50px;height:21px;line-height:21px;font-size:16px;color:#e2e2e2;letter-spacing:-0.688px;">385 cu m</div>
<div class="a t" style="left:661.00px;top:875.50px;height:21px;line-height:21px;font-size:16px;color:#e2e2e2;letter-spacing:-0.857px;">35 m</div>
<div class="a t" style="left:702.00px;top:875.50px;height:21px;line-height:21px;font-size:16px;color:#e2e2e2;letter-spacing:-0.557px;">cu m</div>
<div class="a t" style="left:910.00px;top:875.50px;height:21px;line-height:21px;font-size:16px;color:#e2e2e2;letter-spacing:-0.486px;">77 sq m</div>
<div class="a t" style="left:1038.50px;top:875.50px;height:21px;line-height:21px;font-size:16px;color:#e2e2e2;letter-spacing:-0.688px;">385 cu m</div>
<div class="a t" style="left:1157.00px;top:875.50px;height:21px;line-height:21px;font-size:16px;color:#e2e2e2;letter-spacing:-0.688px;">385 cu m</div>
<div class="a t" style="left:67.00px;top:803.50px;height:21px;line-height:21px;font-size:16px;color:#f2f2f2;font-weight:700;letter-spacing:-1.018px;">Polylength Meas</div>
<div class="a t" style="left:103.00px;top:827.50px;height:21px;line-height:21px;font-size:16px;color:#eaf4ff;letter-spacing:-0.525px;">Polylength</div>
<div class="a t" style="left:67.00px;top:851.50px;height:21px;line-height:21px;font-size:16px;color:#f2f2f2;font-weight:700;letter-spacing:-1.075px;">Volume Measure</div>
<div class="a t" style="left:103.00px;top:875.50px;height:21px;line-height:21px;font-size:16px;color:#e2e2e2;letter-spacing:-0.630px;">Volume Me</div>
<svg class="a" style="left:45.5px;top:810.5px;" width="11.0" height="9.0" viewBox="0 0 11.0 9.0"><path d="M1 2.75 L5.5 7.25 L10.0 2.75" fill="none" stroke="#e4e4e4" stroke-width="1.25"/></svg>
<svg class="a" style="left:45.5px;top:858.5px;" width="11.0" height="9.0" viewBox="0 0 11.0 9.0"><path d="M1 2.75 L5.5 7.25 L10.0 2.75" fill="none" stroke="#e4e4e4" stroke-width="1.25"/></svg>
<div class="a" style="left:37.5px;top:680px;width:140px;height:40.5px;background:linear-gradient(180deg,#27333f,#2c3a48);"></div>
<div class="a" style="left:37.5px;top:720.5px;width:140px;height:26px;background:#1e6299;"></div>
<div class="a" style="left:37.5px;top:746.5px;width:140px;height:53px;background:#3b3b3b;"></div>
<div class="a" style="left:37.5px;top:799px;width:140px;height:2px;background:#1c1c1c;"></div>
<div class="a" style="left:35px;top:676px;width:143px;height:72px;border:3px solid #e8c262;box-sizing:border-box;border-radius:1px;"></div>
<div class="a t" style="left:48.00px;top:687.50px;height:26px;line-height:26px;font-size:20px;color:#ffffff;font-weight:700;letter-spacing:-1.033px;">Markups List</div>
<svg class="a" style="left:167.6px;top:697.9px;" width="8.8" height="6.8" viewBox="0 0 8.8 6.8"><path d="M1 2.2 L4.4 5.6 L7.8 2.2" fill="none" stroke="#d8d8d8" stroke-width="1.15"/></svg>
<div class="a t" style="left:76.00px;top:722.50px;height:21px;line-height:21px;font-size:16px;color:#d5ecff;letter-spacing:-0.522px;">Columns</div>
<div class="a t" style="left:76.00px;top:748.50px;height:21px;line-height:21px;font-size:16px;color:#e6e6e6;letter-spacing:-0.559px;">Markups</div>
<div class="a t" style="left:76.00px;top:774.50px;height:21px;line-height:21px;font-size:16px;color:#e6e6e6;letter-spacing:-0.821px;">Capture</div>
<svg class="a" style="left:159px;top:729px;" width="8" height="10" viewBox="0 0 8 10"><path d="M2.5 1 L6.5 5 L2.5 9" fill="none" stroke="#d5ecff" stroke-width="1.3"/></svg>
<svg class="a" style="left:159px;top:755px;" width="8" height="10" viewBox="0 0 8 10"><path d="M2.5 1 L6.5 5 L2.5 9" fill="none" stroke="#e0e0e0" stroke-width="1.3"/></svg>
<svg class="a" style="left:159px;top:781px;" width="8" height="10" viewBox="0 0 8 10"><path d="M2.5 1 L6.5 5 L2.5 9" fill="none" stroke="#e0e0e0" stroke-width="1.3"/></svg>
<svg class="a" style="left:41px;top:725px;" width="20" height="18" viewBox="0 0 20 18"><rect x="0.7" y="0.7" width="18" height="16" fill="none" stroke="#d5ecff" stroke-width="1.3"/><path d="M0.7 5.5 H18.7 M6.7 0.7 V16.7 M12.7 0.7 V16.7" stroke="#d5ecff" stroke-width="1.2"/></svg>
<div class="a" style="left:0px;top:985px;width:1919px;height:31px;background:#2d2d2d;"></div>
<div class="a" style="left:0px;top:984px;width:1919px;height:1.3px;background:#141414;"></div>
<div class="a t" style="left:2.00px;top:991.00px;height:21px;line-height:21px;font-size:16px;color:#e6e6e6;letter-spacing:-0.281px;">Drag control points to resi</div>
<div class="a" style="left:1319px;top:986px;width:36px;height:30px;background:#1e6299;"></div>
<div class="a" style="left:1427px;top:986px;width:36px;height:30px;background:#1e6299;"></div>
<svg class="a" style="left:1465px;top:998px;" width="10" height="8" viewBox="0 0 10 8"><path d="M1 2.5 L5 6.5 L9 2.5" fill="none" stroke="#d0d0d0" stroke-width="1.1"/></svg>
<div class="a t" style="left:1509.00px;top:991.50px;height:20px;line-height:20px;font-size:15px;color:#e6e6e6;letter-spacing:-0.290px;">3.75 in = 30&#x27;-0&quot;</div>
<div class="a t" style="left:1637.00px;top:991.50px;height:20px;line-height:20px;font-size:15px;color:#e6e6e6;letter-spacing:-0.250px;">42.00 x 30.00 in</div>
<div class="a t" style="left:1802.00px;top:991.50px;height:20px;line-height:20px;font-size:15px;color:#e6e6e6;letter-spacing:-0.393px;">(-0.26, 9.36)</div>
<div class="a" style="left:180px;top:108px;width:203.5px;height:909px;background:#3c3c3c;box-shadow:0 0 0 1px #1d1d1d,0 0 4px 1px rgba(0,0,0,0.6);"></div>
<div class="a t" style="left:214.00px;top:108.50px;height:20px;line-height:20px;font-size:15.5px;color:#ececec;letter-spacing:-0.283px;">Subject</div>
<svg class="a" style="left:185px;top:112.5px;" width="13" height="12" viewBox="0 0 13 12"><path d="M1 6.5 L4.6 10.3 L12 1.5" fill="none" stroke="#cdcdcd" stroke-width="1.15"/></svg>
<div class="a t" style="left:214.00px;top:130.50px;height:20px;line-height:20px;font-size:15.5px;color:#ececec;letter-spacing:-0.604px;">Page Label</div>
<div class="a t" style="left:214.00px;top:152.50px;height:20px;line-height:20px;font-size:15.5px;color:#ececec;letter-spacing:-0.603px;">Page Index</div>
<div class="a t" style="left:214.00px;top:174.50px;height:20px;line-height:20px;font-size:15.5px;color:#ececec;letter-spacing:0.086px;">Lock</div>
<div class="a t" style="left:214.00px;top:196.50px;height:20px;line-height:20px;font-size:15.5px;color:#ececec;letter-spacing:-0.134px;">Author</div>
<svg class="a" style="left:185px;top:200.5px;" width="13" height="12" viewBox="0 0 13 12"><path d="M1 6.5 L4.6 10.3 L12 1.5" fill="none" stroke="#cdcdcd" stroke-width="1.15"/></svg>
<div class="a t" style="left:214.00px;top:218.50px;height:20px;line-height:20px;font-size:15.5px;color:#ececec;letter-spacing:-0.580px;">Date</div>
<svg class="a" style="left:185px;top:222.5px;" width="13" height="12" viewBox="0 0 13 12"><path d="M1 6.5 L4.6 10.3 L12 1.5" fill="none" stroke="#cdcdcd" stroke-width="1.15"/></svg>
<div class="a t" style="left:214.00px;top:240.50px;height:20px;line-height:20px;font-size:15.5px;color:#ececec;letter-spacing:0.051px;">Tick mark</div>
<div class="a t" style="left:214.00px;top:262.50px;height:20px;line-height:20px;font-size:15.5px;color:#ececec;letter-spacing:-0.303px;">Creation Date</div>
<div class="a t" style="left:214.00px;top:284.50px;height:20px;line-height:20px;font-size:15.5px;color:#ececec;letter-spacing:-0.132px;">Colour</div>
<div class="a t" style="left:214.00px;top:306.50px;height:20px;line-height:20px;font-size:15.5px;color:#ececec;letter-spacing:-0.134px;">Comments</div>
<svg class="a" style="left:185px;top:310.5px;" width="13" height="12" viewBox="0 0 13 12"><path d="M1 6.5 L4.6 10.3 L12 1.5" fill="none" stroke="#cdcdcd" stroke-width="1.15"/></svg>
<div class="a t" style="left:214.00px;top:328.50px;height:20px;line-height:20px;font-size:15.5px;color:#ececec;letter-spacing:-0.482px;">Length</div>
<svg class="a" style="left:185px;top:332.5px;" width="13" height="12" viewBox="0 0 13 12"><path d="M1 6.5 L4.6 10.3 L12 1.5" fill="none" stroke="#cdcdcd" stroke-width="1.15"/></svg>
<div class="a t" style="left:214.00px;top:350.50px;height:20px;line-height:20px;font-size:15.5px;color:#ececec;letter-spacing:-0.405px;">Width</div>
<div class="a t" style="left:214.00px;top:372.50px;height:20px;line-height:20px;font-size:15.5px;color:#ececec;letter-spacing:-0.161px;">Height</div>
<div class="a t" style="left:214.00px;top:394.50px;height:20px;line-height:20px;font-size:15.5px;color:#ececec;letter-spacing:-0.590px;">Depth</div>
<div class="a t" style="left:214.00px;top:416.50px;height:20px;line-height:20px;font-size:15.5px;color:#ececec;letter-spacing:-0.239px;">Rise/Drop</div>
<div class="a t" style="left:214.00px;top:438.50px;height:20px;line-height:20px;font-size:15.5px;color:#ececec;letter-spacing:-0.411px;">Slope</div>
<div class="a t" style="left:214.00px;top:460.50px;height:20px;line-height:20px;font-size:15.5px;color:#ececec;">X</div>
<div class="a t" style="left:214.00px;top:482.50px;height:20px;line-height:20px;font-size:15.5px;color:#ececec;">Y</div>
<div class="a t" style="left:214.00px;top:504.50px;height:20px;line-height:20px;font-size:15.5px;color:#ececec;letter-spacing:-0.596px;">X Centre</div>
<div class="a t" style="left:214.00px;top:526.50px;height:20px;line-height:20px;font-size:15.5px;color:#ececec;letter-spacing:-0.556px;">Y Centre</div>
<div class="a t" style="left:214.00px;top:548.50px;height:20px;line-height:20px;font-size:15.5px;color:#ececec;letter-spacing:-0.275px;">Document Width</div>
<div class="a t" style="left:214.00px;top:570.50px;height:20px;line-height:20px;font-size:15.5px;color:#ececec;letter-spacing:-0.197px;">Document Height</div>
<div class="a t" style="left:214.00px;top:592.50px;height:20px;line-height:20px;font-size:15.5px;color:#ececec;letter-spacing:-0.188px;">Unit</div>
<svg class="a" style="left:185px;top:596.5px;" width="13" height="12" viewBox="0 0 13 12"><path d="M1 6.5 L4.6 10.3 L12 1.5" fill="none" stroke="#cdcdcd" stroke-width="1.15"/></svg>
<div class="a t" style="left:214.00px;top:614.50px;height:20px;line-height:20px;font-size:15.5px;color:#ececec;letter-spacing:-0.581px;">Area</div>
<svg class="a" style="left:185px;top:618.5px;" width="13" height="12" viewBox="0 0 13 12"><path d="M1 6.5 L4.6 10.3 L12 1.5" fill="none" stroke="#cdcdcd" stroke-width="1.15"/></svg>
<div class="a t" style="left:214.00px;top:636.50px;height:20px;line-height:20px;font-size:15.5px;color:#ececec;letter-spacing:0.060px;">Volume</div>
<svg class="a" style="left:185px;top:640.5px;" width="13" height="12" viewBox="0 0 13 12"><path d="M1 6.5 L4.6 10.3 L12 1.5" fill="none" stroke="#cdcdcd" stroke-width="1.15"/></svg>
<div class="a t" style="left:214.00px;top:658.50px;height:20px;line-height:20px;font-size:15.5px;color:#ececec;letter-spacing:-0.277px;">Measurement</div>
<svg class="a" style="left:185px;top:662.5px;" width="13" height="12" viewBox="0 0 13 12"><path d="M1 6.5 L4.6 10.3 L12 1.5" fill="none" stroke="#cdcdcd" stroke-width="1.15"/></svg>
<div class="a t" style="left:214.00px;top:680.50px;height:20px;line-height:20px;font-size:15.5px;color:#ececec;letter-spacing:-0.189px;">Status</div>
<svg class="a" style="left:185px;top:684.5px;" width="13" height="12" viewBox="0 0 13 12"><path d="M1 6.5 L4.6 10.3 L12 1.5" fill="none" stroke="#cdcdcd" stroke-width="1.15"/></svg>
<div class="a t" style="left:214.00px;top:702.50px;height:20px;line-height:20px;font-size:15.5px;color:#ececec;letter-spacing:-0.220px;">Wall Area</div>
<div class="a t" style="left:214.00px;top:724.50px;height:20px;line-height:20px;font-size:15.5px;color:#ececec;letter-spacing:-0.340px;">Count</div>
<div class="a t" style="left:214.00px;top:746.50px;height:20px;line-height:20px;font-size:15.5px;color:#ececec;letter-spacing:-0.482px;">Label</div>
<div class="a t" style="left:214.00px;top:768.50px;height:20px;line-height:20px;font-size:15.5px;color:#ececec;letter-spacing:-0.545px;">Sequence</div>
<div class="a t" style="left:214.00px;top:790.50px;height:20px;line-height:20px;font-size:15.5px;color:#ececec;letter-spacing:-0.406px;">3D View</div>
<div class="a t" style="left:214.00px;top:812.50px;height:20px;line-height:20px;font-size:15.5px;color:#ececec;letter-spacing:-0.694px;">Layer</div>
<div class="a t" style="left:214.00px;top:834.50px;height:20px;line-height:20px;font-size:15.5px;color:#ececec;letter-spacing:-0.745px;">Legend</div>
<div class="a t" style="left:214.00px;top:856.50px;height:20px;line-height:20px;font-size:15.5px;color:#ececec;letter-spacing:-0.738px;">Space</div>
<div class="a t" style="left:214.00px;top:878.50px;height:20px;line-height:20px;font-size:15.5px;color:#ececec;letter-spacing:-0.524px;">Capture</div>
<div class="a t" style="left:214.00px;top:900.50px;height:20px;line-height:20px;font-size:15.5px;color:#ececec;letter-spacing:-0.463px;">GoCanvas Status</div>
<div class="a t" style="left:214.00px;top:922.50px;height:20px;line-height:20px;font-size:15.5px;color:#ececec;letter-spacing:-0.507px;">Mass (KG)</div>
<div class="a t" style="left:214.00px;top:944.50px;height:20px;line-height:20px;font-size:15.5px;color:#ececec;letter-spacing:-0.281px;">Density</div>
<div class="a" style="left:189px;top:969.5px;width:185px;height:1px;background:#7a7a7a;"></div>
<div class="a t" style="left:214.00px;top:972.50px;height:20px;line-height:20px;font-size:15.5px;color:#ececec;letter-spacing:-0.084px;">Select All</div>
<div class="a t" style="left:214.00px;top:994.50px;height:20px;line-height:20px;font-size:15.5px;color:#ececec;letter-spacing:-0.400px;">Manage Columns...</div>
<div class="a" style="left:0;top:489.5px;width:35px;height:35.5px;background:#1e6299"></div>
<svg class="a" style="left:0;top:0" width="1919" height="1016" viewBox="0 0 1919 1016"><path d="M11.8 37.7 H35.8 M14.5 35 V60 M17.8 34.5 V37.7 M11.3 41.0 H14.5 M21.4 34.5 V37.7 M11.3 44.6 H14.5 M25.0 34.5 V37.7 M11.3 48.2 H14.5 M28.6 34.5 V37.7 M11.3 51.8 H14.5 M32.2 34.5 V37.7 M11.3 55.4 H14.5" fill="none" stroke="#51489a" stroke-width="1.1"/><path d="M19.0 48.8 L25.4 42.2 L34.2 42.2 L34.2 57.6 L19.0 57.6" fill="none" stroke="#ececec" stroke-width="1.5"/><rect x="17.1" y="46.9" width="3.8" height="3.8" fill="#ececec"/><rect x="23.5" y="40.3" width="3.8" height="3.8" fill="#ececec"/><rect x="32.3" y="40.3" width="3.8" height="3.8" fill="#ececec"/><rect x="32.3" y="55.7" width="3.8" height="3.8" fill="#ececec"/><rect x="17.1" y="55.7" width="3.8" height="3.8" fill="#ececec"/><path d="M774.2 42.4 L771.6 48.6 L781.3 57.2 L786.3 52.3 Z" fill="#4b400f" stroke="#d9d080" stroke-width="1.2"/><path d="M780.8 36 L774.2 42.4 L788.2 53.9 L790 52.2" fill="none" stroke="#d9d080" stroke-width="1.3"/><path d="M773 50.6 L766.4 58.3 H777 L780.3 55.8" fill="none" stroke="#f1eedd" stroke-width="1.3"/><path d="M814.2 58.6 V48 L822 40 H832.6 M811 53.4 H817.6 M827.3 36.8 V43.6 M815.8 42 L820.8 46.6" fill="none" stroke="#dcf5ff" stroke-width="1.4"/><g fill="none" stroke="#ececec" stroke-width="1.4" stroke-linejoin="round" stroke-linecap="butt"><circle cx="14" cy="84" r="6"/><path d="M18.3 88.3 L26 96"/></g><g fill="none" stroke="#ececec" stroke-width="1.3" stroke-linejoin="round" stroke-linecap="butt"><path d="M14.7 112.9 L19.3 112.9 L19.9 115.4 L19.5 115.3 L21.7 113.9 L24.9 117.1 L23.5 119.3 L23.4 118.9 L25.9 119.5 L25.9 124.1 L23.4 124.7 L23.5 124.3 L24.9 126.5 L21.7 129.7 L19.5 128.3 L19.9 128.2 L19.3 130.7 L14.7 130.7 L14.1 128.2 L14.5 128.3 L12.3 129.7 L9.1 126.5 L10.5 124.3 L10.6 124.7 L8.1 124.1 L8.1 119.5 L10.6 118.9 L10.5 119.3 L9.1 117.1 L12.3 113.9 L14.5 115.3 L14.1 115.4 Z"/><circle cx="17" cy="121.8" r="4.3"/></g><g fill="none" stroke="#ececec" stroke-width="1.2" stroke-linejoin="round" stroke-linecap="butt"><path d="M11 148.5 H23 L26 160 H8 Z M13 151 H21 L22.3 157 H11.7 Z M17.5 151 L18.3 157"/><path d="M8 161.9 H26 M8 164.4 H26 M8 166.9 H26" stroke-width="1"/></g><g fill="none" stroke="#ececec" stroke-width="1.3" stroke-linejoin="round" stroke-linecap="butt"><path d="M12.3 184.2 H10.3 V200.8 H23.7 V184.2 H17"/><path d="M12.4 183 H17 V194.6 L14.7 192.6 L12.4 194.6 Z"/></g><g fill="none" stroke="#ececec" stroke-width="1.3" stroke-linejoin="round" stroke-linecap="butt"><rect x="8.5" y="218.5" width="7.2" height="7.2"/><rect x="18.5" y="218.5" width="7.2" height="7.2"/><rect x="8.5" y="228.5" width="7.2" height="7.2"/><rect x="18.5" y="228.5" width="7.2" height="7.2"/></g><g fill="none" stroke="#ececec" stroke-width="1.3" stroke-linejoin="round" stroke-linecap="butt"><path d="M22 266 H25.8 V253.3 H8.5 V270.7 H15.8 V265.3 H12.3 M8.5 260.5 H12 M15 260.5 H19 V253.3 M19 265.3 H15.8"/></g><g fill="none" stroke="#ececec" stroke-width="1.3" stroke-linejoin="round" stroke-linecap="butt"><rect x="10" y="288.5" width="14" height="17.5"/><path d="M10 297.2 H24 M14.8 291.6 V292.8 H19.2 V291.6 M14.8 300.2 V301.4 H19.2 V300.2"/></g><g fill="none" stroke="#ececec" stroke-width="1.2" stroke-linejoin="round" stroke-linecap="butt"><path d="M23 334 V340.6 H8.2 V323.5 H23 V326"/><path d="M10.6 328 H20 M10.6 331.6 H16 M10.6 335.2 H14"/><path d="M15.2 337.6 L16 334.4 L23.8 328 L26 330.2 L18.2 337 Z"/></g><g fill="none" stroke="#ececec" stroke-width="1.3" stroke-linejoin="round" stroke-linecap="butt"><path d="M8.6 363 L20 358.4 L26 362.5 V372.5 L20.5 375.6 L8.6 372.8 Z"/><rect x="11.6" y="368" width="4" height="4.4"/></g><g fill="none" stroke="#ececec" stroke-width="1.2" stroke-linejoin="round" stroke-linecap="butt"><path d="M8 410.4 H26"/><path d="M11.6 407.4 L13.2 400 L18.2 397.2 L23 401.6 L20 406.4 Z M18.2 397.2 L19.8 393.6 M23 401.6 L26 399.4 M17.5 394.4 L25 400.6"/><circle cx="15.3" cy="403.8" r="0.9"/></g><g fill="none" stroke="#ececec" stroke-width="1.2" stroke-linejoin="round" stroke-linecap="butt"><path d="M16.5 442 C13 437 11.3 435.2 11.3 432.4 A5.2 5.2 0 0 1 21.7 432.4 C21.7 435.2 20 437 16.5 442 Z"/><circle cx="16.5" cy="432.6" r="1.7"/><path d="M12.5 439.6 C9.5 440.2 7.7 441 7.7 442 C7.7 443.5 11.5 444.6 16.5 444.6 C21.5 444.6 25.3 443.5 25.3 442 C25.3 441 23.5 440.2 20.5 439.6"/></g><g fill="none" stroke="#ececec" stroke-width="1.3" stroke-linejoin="round" stroke-linecap="butt"><rect x="8.3" y="467.6" width="17.6" height="11" rx="1"/><path d="M13.2 467.6 V465.6 Q13.2 464.4 14.4 464.4 H19.8 Q21 464.4 21 465.6 V467.6 M8.3 472.6 H25.9 M12.6 472.6 V474.2 M21.6 472.6 V474.2"/></g><g fill="none" stroke="#b8f1ff" stroke-width="1.3" stroke-linejoin="round" stroke-linecap="butt"><rect x="7.2" y="502" width="18.8" height="9.6"/><path d="M10.2 502 V506.6 M13.2 502 V506.6 M16.4 502 V508 M19.6 502 V506.6 M22.8 502 V506.6"/></g><g fill="none" stroke="#ececec" stroke-width="1.3" stroke-linejoin="round" stroke-linecap="butt"><path d="M17 533.4 L25.6 538.4 L17 543.4 L8.4 538.4 Z M10.8 542.6 L8.4 544 L17 549 L25.6 544 L23.2 542.6"/></g><g fill="none" stroke="#ececec" stroke-width="1.5" stroke-linejoin="round" stroke-linecap="butt"><path d="M1892.5 108.5 L1910 91.5"/></g><g fill="none" stroke="#ececec" stroke-width="1.5" stroke-linejoin="round" stroke-linecap="butt"><path d="M1892.5 144.4 L1905 132.3"/></g><path d="M1909.6 127.8 L1907.6 135.6 L1902 130 Z" fill="#ececec"/><g fill="none" stroke="#ececec" stroke-width="1.5" stroke-linejoin="round" stroke-linecap="butt"><path d="M1892.5 181 A17.5 17.5 0 0 1 1910 163.5"/></g><g fill="none" stroke="#ececec" stroke-width="1.4" stroke-linejoin="round" stroke-linecap="butt"><path d="M1892.5 217 L1895.3 207.6 L1900 211 L1902.2 201.6 L1907 205 L1910 199"/></g><g fill="none" stroke="#ececec" stroke-width="1.2" stroke-linejoin="round" stroke-linecap="butt"><path d="M1893 240.6 V248.6 M1909.3 240.6 V248.6 M1893 244.6 H1909.3 M1895.6 242.4 L1893.4 244.6 L1895.6 246.8 M1906.7 242.4 L1908.9 244.6 L1906.7 246.8"/></g><g fill="none" stroke="#ececec" stroke-width="1.4" stroke-linejoin="round" stroke-linecap="butt"><rect x="1892.6" y="274.2" width="17.4" height="13.6"/></g><g fill="none" stroke="#ececec" stroke-width="1.4" stroke-linejoin="round" stroke-linecap="butt"><ellipse cx="1901" cy="316" rx="8.8" ry="6.6"/></g><g fill="none" stroke="#ececec" stroke-width="1.4" stroke-linejoin="round" stroke-linecap="butt"><path d="M1892.6 344 H1907.5 L1902.4 352.4 L1910 360.6 H1892.6 Z"/></g><path d="M1891.5 380.2 H1911.5 M1894.2 377.5 V397.5 M1897.5 377.0 V380.2 M1891.0 383.5 H1894.2 M1901.1 377.0 V380.2 M1891.0 387.1 H1894.2 M1904.7 377.0 V380.2 M1891.0 390.7 H1894.2 M1908.3 377.0 V380.2 M1891.0 394.3 H1894.2 M1911.9 377.0 V380.2 M1891.0 397.9 H1894.2" fill="none" stroke="#4f4696" stroke-width="1.1"/><path d="M1891.5 416.2 H1911.5 M1894.2 413.5 V433.5 M1897.5 413.0 V416.2 M1891.0 419.5 H1894.2 M1901.1 413.0 V416.2 M1891.0 423.1 H1894.2 M1904.7 413.0 V416.2 M1891.0 426.7 H1894.2 M1908.3 413.0 V416.2 M1891.0 430.3 H1894.2 M1911.9 413.0 V416.2 M1891.0 433.9 H1894.2" fill="none" stroke="#4f4696" stroke-width="1.1"/><path d="M1891.5 452.2 H1911.5 M1894.2 449.5 V469.5 M1897.5 449.0 V452.2 M1891.0 455.5 H1894.2 M1901.1 449.0 V452.2 M1891.0 459.1 H1894.2 M1904.7 449.0 V452.2 M1891.0 462.7 H1894.2 M1908.3 449.0 V452.2 M1891.0 466.3 H1894.2 M1911.9 449.0 V452.2 M1891.0 469.9 H1894.2" fill="none" stroke="#4f4696" stroke-width="1.1"/><path d="M1891.5 488.2 H1911.5 M1894.2 485.5 V505.5 M1897.5 485.0 V488.2 M1891.0 491.5 H1894.2 M1901.1 485.0 V488.2 M1891.0 495.1 H1894.2 M1904.7 485.0 V488.2 M1891.0 498.7 H1894.2 M1908.3 485.0 V488.2 M1891.0 502.3 H1894.2 M1911.9 485.0 V488.2 M1891.0 505.9 H1894.2" fill="none" stroke="#4f4696" stroke-width="1.1"/><path d="M1897.5 389 L1902.3 383.6 L1909.5 383.6 L1909.5 396.2 L1897.5 396.2" fill="none" stroke="#ececec" stroke-width="1.4"/><rect x="1895.8" y="387.3" width="3.4" height="3.4" fill="#ececec"/><rect x="1900.6" y="381.90000000000003" width="3.4" height="3.4" fill="#ececec"/><rect x="1907.8" y="381.90000000000003" width="3.4" height="3.4" fill="#ececec"/><rect x="1907.8" y="394.5" width="3.4" height="3.4" fill="#ececec"/><rect x="1895.8" y="394.5" width="3.4" height="3.4" fill="#ececec"/><g fill="none" stroke="#ececec" stroke-width="1.4" stroke-linejoin="round" stroke-linecap="butt"><path d="M1896.3 433.6 V425 L1902.6 418.4 H1910 V433.6 Z"/></g><g fill="none" stroke="#ececec" stroke-width="1.3" stroke-linejoin="round" stroke-linecap="butt"><path d="M1896.6 454.6 V466.6 M1910.4 454.6 V466.6 M1897 460.6 H1910 M1900 458 L1897.4 460.6 L1900 463.2 M1907 458 L1909.6 460.6 L1907 463.2"/></g><g fill="none" stroke="#ececec" stroke-width="1.2" stroke-linejoin="round" stroke-linecap="butt"><path d="M1899.6 493.6 V504 M1902.6 493.6 V504 M1905.6 493.6 V504 M1908.6 493.6 V504 M1895.6 502.4 L1911 495.4"/></g><g fill="none" stroke="#6a6a6a" stroke-width="1.1" stroke-linejoin="round" stroke-linecap="butt"><rect x="49.2" y="649.4" width="16.6" height="16"/><path d="M49.2 651.4 H65.8"/></g><g fill="none" stroke="#ececec" stroke-width="1.3" stroke-linejoin="round" stroke-linecap="butt"><rect x="85.2" y="649.4" width="16.6" height="16"/><path d="M85.2 651.2 H101.8 M93.5 649.4 V665.4"/></g><g fill="none" stroke="#ececec" stroke-width="1.3" stroke-linejoin="round" stroke-linecap="butt"><rect x="121.2" y="649.4" width="16.6" height="16"/><path d="M121.2 651.2 H137.8 M121.2 656.9 H137.8 M121.2 658.7 H137.8"/></g><path d="M151.3 649 V668" stroke="#777" stroke-width="1.1"/><g fill="none" stroke="#ececec" stroke-width="1.2" stroke-linejoin="round" stroke-linecap="butt"><path d="M179 666.6 H165.3 V649.6 H174.5 L179 654"/><path d="M174.5 649.6 V654 H179"/><path d="M167 659.5 H178 M171.8 654.5 V665 M168.8 657.7 L167 659.5 L168.8 661.3 M170 656.3 L171.8 654.5 L173.6 656.3 M170 663.2 L171.8 665 L173.6 663.2 M176.2 657.7 L178 659.5 L176.2 661.3"/></g><g fill="none" stroke="#cfeeff" stroke-width="1.2" stroke-linejoin="round" stroke-linecap="butt"><path d="M573.6 659.5 L571.3 657.6 Q570 656.8 569.6 657.8 Q569.3 658.6 570.2 659.6 L574.3 665 Q575.6 666.6 577.6 666.6 H581 Q583 666.6 584 664.4 L586 658.4 Q586.4 657 585.4 656.6 Q584.4 656.4 584 657.6 L583.2 659.4 L584.3 653.6 Q584.5 652.4 583.5 652.2 Q582.5 652 582.2 653.2 L581 658 L581.2 651.4 Q581.2 650.2 580.2 650.2 Q579.2 650.2 579.1 651.4 L578.8 658 L577.6 652.4 Q577.3 651.2 576.3 651.4 Q575.3 651.7 575.5 652.9 L576.3 658.5 L576.4 661.5 Z"/></g><g fill="none" stroke="#ececec" stroke-width="1.3" stroke-linejoin="round" stroke-linecap="butt"><path d="M609.4 650.6 V664.2 L612.6 661.4 L614.6 666 L616.8 665 L614.8 660.6 H619 Z"/></g><g fill="none" stroke="#ececec" stroke-width="1.2" stroke-linejoin="round" stroke-linecap="butt"><path d="M642.4 650.2 H648.4 M642.4 666.4 H648.4 M645.4 650.2 V666.4"/></g><g fill="none" stroke="#ececec" stroke-width="1.3" stroke-linejoin="round" stroke-linecap="butt"><path d="M648.6 662.4 L652.3 653.2 L656 662.4 M650 659.4 H654.6"/></g><g fill="none" stroke="#ececec" stroke-width="1.3" stroke-linejoin="round" stroke-linecap="butt"><circle cx="683" cy="655.8" r="6"/><path d="M687.4 660.2 L695 667.2"/><path d="M680.4 654.2 H685.6 M683 651.8 V656.6 M680.8 658.4 H685.2" stroke-width="1.1"/></g><g fill="none" stroke="#5c5c5c" stroke-width="1.2" stroke-linejoin="round" stroke-linecap="butt"><path d="M717.3 652.2 V663.6 M725.8 652.6 V663.2 L719.4 657.9 Z"/></g><g fill="none" stroke="#5c5c5c" stroke-width="1.2" stroke-linejoin="round" stroke-linecap="butt"><path d="M761 652.6 V663.2 L754.4 657.9 Z"/></g><g fill="none" stroke="#5c5c5c" stroke-width="1.2" stroke-linejoin="round" stroke-linecap="butt"><path d="M1099 652.6 V663.2 L1105.6 657.9 Z"/></g><g fill="none" stroke="#5c5c5c" stroke-width="1.2" stroke-linejoin="round" stroke-linecap="butt"><path d="M1142.6 652.2 V663.6 M1134.2 652.6 V663.2 L1140.6 657.9 Z"/></g><path d="M1159.5 649 V668" stroke="#777" stroke-width="1.1"/><g fill="none" stroke="#ececec" stroke-width="1.4" stroke-linejoin="round" stroke-linecap="butt"><circle cx="1180" cy="658" r="8.4"/><path d="M1182.6 653.8 V662.2 L1176 658 Z"/></g><g fill="none" stroke="#5c5c5c" stroke-width="1.2" stroke-linejoin="round" stroke-linecap="butt"><circle cx="1216" cy="658" r="8.4"/><path d="M1213.4 653.8 V662.2 L1220 658 Z"/></g><circle cx="1587.5" cy="657.8" r="8.6" fill="none" stroke="#f0f0f0" stroke-width="1.4"/><path d="M1587.5 649.2 A8.6 8.6 0 0 0 1587.5 666.4 Z" fill="#f0f0f0"/><g fill="#c9f1ff"><rect x="8.6" y="726.6" width="2.6" height="2.2"/><rect x="8.6" y="731.8" width="2.6" height="2.2"/><rect x="8.6" y="737" width="2.6" height="2.2"/><rect x="13.8" y="726.8" width="11.8" height="1.8"/><rect x="13.8" y="732" width="11.8" height="1.8"/><rect x="13.8" y="737.2" width="11.8" height="1.8"/></g><g fill="none" stroke="#ececec" stroke-width="1.2" stroke-linejoin="round" stroke-linecap="butt"><path d="M16.5 759.4 L25.8 763 V772.6 L16.5 776.4 L7.2 772.6 V763 Z M7.2 763 L16.5 766.6 L25.8 763 M16.5 766.6 V776.4"/></g><text x="9.6" y="772.6" font-size="6.6" font-weight="700" fill="#ececec" style="font-family:'Liberation Sans'">3</text><text x="18.4" y="772.6" font-size="6.6" font-weight="700" fill="#ececec" style="font-family:'Liberation Sans'">D</text><g fill="none" stroke="#ececec" stroke-width="1.2" stroke-linejoin="round" stroke-linecap="butt"><path d="M11.4 808 V796 Q11.4 794 13.4 794 H24 Q26 794 26 796 V798 H22.6 M22.6 796 V809.6 Q22.6 811.6 20.6 811.6 H10 Q8 811.6 8 809.6 V808 H19.8 V809.6 Q19.8 811.6 20.8 811.6"/></g><text x="12.4" y="805" font-size="6.6" font-weight="700" fill="#ececec" style="font-family:'Liberation Sans'">JS</text><path d="M83.6 832 H99.6 M85.6 830 V848 M88.6 829.3 V832 M82.89999999999999 835.0 H85.6 M92.0 829.3 V832 M82.89999999999999 838.4 H85.6 M95.4 829.3 V832 M82.89999999999999 841.8 H85.6 M98.8 829.3 V832 M82.89999999999999 845.2 H85.6" fill="none" stroke="#6f7fd0" stroke-width="0.9" stroke-dasharray="1.2 0.8"/><path d="M86.6 838.6 L90.6 834.4 L98.6 834.4 L98.6 846.8 L86.6 846.8" fill="none" stroke="#d9f3ff" stroke-width="1.3"/><rect x="85.0" y="837.0" width="3.2" height="3.2" fill="#d9f3ff"/><rect x="89.0" y="832.8" width="3.2" height="3.2" fill="#d9f3ff"/><rect x="97.0" y="832.8" width="3.2" height="3.2" fill="#d9f3ff"/><rect x="97.0" y="845.1999999999999" width="3.2" height="3.2" fill="#d9f3ff"/><rect x="85.0" y="845.1999999999999" width="3.2" height="3.2" fill="#d9f3ff"/><path d="M83.6 880 H99.6 M85.6 878 V896 M88.6 877.3 V880 M82.89999999999999 883.0 H85.6 M92.0 877.3 V880 M82.89999999999999 886.4 H85.6 M95.4 877.3 V880 M82.89999999999999 889.8 H85.6 M98.8 877.3 V880 M82.89999999999999 893.2 H85.6" fill="none" stroke="#6a5fb5" stroke-width="0.9" stroke-dasharray="1.2 0.8"/><g fill="none" stroke="#ececec" stroke-width="1.0" stroke-linejoin="round" stroke-linecap="butt"><path d="M92.6 881.6 L99.6 884.4 V892.6 L92.6 896 L85.6 892.6 V884.4 Z M85.6 884.4 L92.6 887.2 L99.6 884.4 M92.6 887.2 V896 M85.6 888.6 L92.6 891.6 L99.6 888.6 M89 883 L96.2 885.8 M96.2 883 L89 885.8"/></g><g fill="none" stroke="#ececec" stroke-width="1.2" stroke-linejoin="round" stroke-linecap="butt"><path d="M1259.2 993 V1010 M1264.6 993 V1010 M1270 993 V1010 M1256 995.4 H1273.4 M1256 1000.8 H1273.4 M1256 1006.2 H1273.4"/></g><g fill="none" stroke="#ececec" stroke-width="1.2" stroke-linejoin="round" stroke-linecap="butt"><path d="M1295.2 993 V1010 M1300 993 V999.6 M1304.8 993 V998 M1292 995.4 H1309 M1292 1000.6 H1300 M1292 1006 H1298"/></g><g fill="none" stroke="#ececec" stroke-width="1.35" stroke-linejoin="round" stroke-linecap="butt"><path d="M1300.6 1001 H1305.6 A4.4 4.4 0 0 1 1305.6 1009.8 H1300.6 V1007.2 H1305.6 A1.8 1.8 0 0 0 1305.6 1003.6 H1300.6 Z"/></g><g fill="none" stroke="#cfeeff" stroke-width="1.2" stroke-linejoin="round" stroke-linecap="butt"><path d="M1340 1010 H1330.6 V993.4 H1340.2 L1344.6 997.8 V1000 M1340.2 993.4 V997.8 H1344.6"/></g><g fill="none" stroke="#cfeeff" stroke-width="1.35" stroke-linejoin="round" stroke-linecap="butt"><path d="M1336.4 1001.2 H1341.4 A4.4 4.4 0 0 1 1341.4 1010.0 H1336.4 V1007.4000000000001 H1341.4 A1.8 1.8 0 0 0 1341.4 1003.8000000000001 H1336.4 Z"/></g><g fill="none" stroke="#ececec" stroke-width="1.2" stroke-linejoin="round" stroke-linecap="butt"><path d="M1365.6 1006.4 L1377.4 994.2 L1381.6 998.4 L1380 1000 M1365.6 1006.4 L1368.4 1009.2 M1364.6 1008.6 L1366.4 1010.4"/></g><g fill="none" stroke="#ececec" stroke-width="1.35" stroke-linejoin="round" stroke-linecap="butt"><path d="M1371.6 1001.2 H1376.6 A4.4 4.4 0 0 1 1376.6 1010.0 H1371.6 V1007.4000000000001 H1376.6 A1.8 1.8 0 0 0 1376.6 1003.8000000000001 H1371.6 Z"/></g><g fill="none" stroke="#ececec" stroke-width="1.2" stroke-linejoin="round" stroke-linecap="butt"><path d="M1401.6 1006.4 L1413.4 994.2 L1417.6 998.4 L1416 1000 M1401.6 1006.4 L1404.4 1009.2 M1400.6 1008.6 L1402.4 1010.4"/></g><circle cx="1412.6" cy="1005" r="4.6" fill="#23394c" stroke="#2c6d9e" stroke-width="1.1"/><path d="M1412 1002 L1415.4 1001.4 L1414.6 1004.8" fill="none" stroke="#2f85c5" stroke-width="1.1"/><g fill="none" stroke="#cfeeff" stroke-width="1.2" stroke-linejoin="round" stroke-linecap="butt"><rect x="1436.2" y="993.4" width="17.8" height="17"/><path d="M1436.2 995.6 H1454 M1440 1000.2 H1450.6 M1448.2 997.8 L1450.6 1000.2 L1448.2 1002.6 M1450.2 1005.6 H1439.6 M1442 1003.2 L1439.6 1005.6 L1442 1008"/></g></svg>
</body></html>
